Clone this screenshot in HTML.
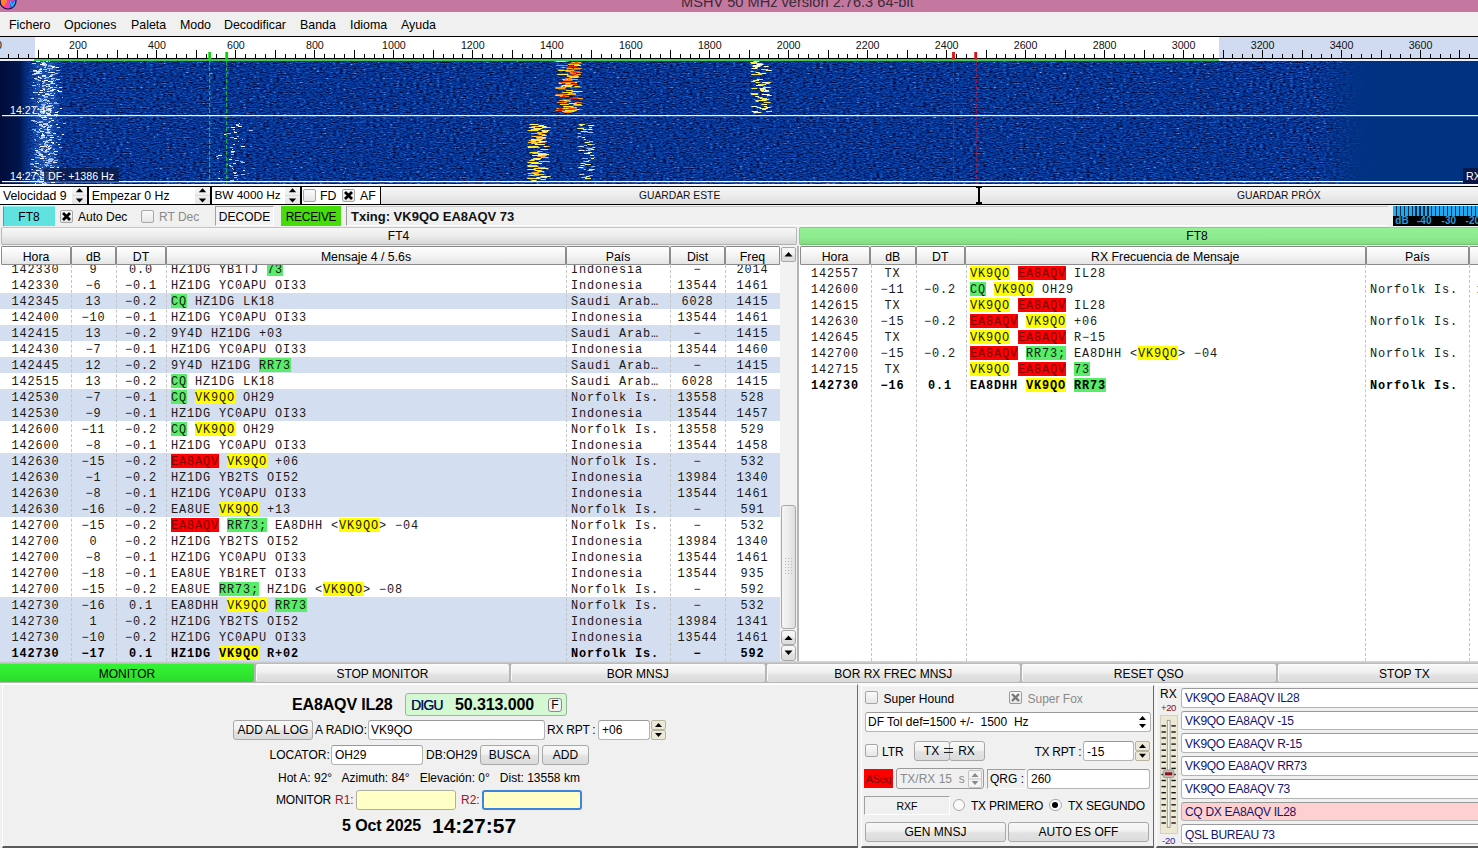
<!DOCTYPE html><html><head><meta charset="utf-8"><title>MSHV</title><style>
*{box-sizing:border-box;margin:0;padding:0}
html,body{width:1478px;height:848px;overflow:hidden;background:#f0f0f0}
body{position:relative;font-family:"Liberation Sans",sans-serif;font-size:12px;color:#000}
.a{position:absolute;white-space:nowrap}
.t{position:absolute;white-space:nowrap;line-height:1}
.mono{font-family:"Liberation Mono",monospace;font-size:11.9px;letter-spacing:0.86px;line-height:16px;color:#1a1a1a}
.btn{position:absolute;white-space:nowrap;text-align:center;border:1px solid #a8a8a8;border-radius:3px;background:linear-gradient(#f8f8f8,#f1f1f1 45%,#e2e2e2 55%,#dcdcdc);}
.hd{position:absolute;top:247px;height:18.7px;border:1px solid #8c8c8c;border-top-color:#868686;border-radius:1.5px;background:linear-gradient(#ffffff,#f4f4f4 50%,#e4e4e4);text-align:center;line-height:20.6px;font-size:12.3px;white-space:nowrap;overflow:hidden}
.inp{position:absolute;background:#fff;border:1px solid #b4b4b4;border-top-color:#9a9a9a;border-radius:3px;white-space:nowrap;padding-left:3px}
.cb{position:absolute;width:13px;height:13px;border:1px solid #a6a6a6;border-radius:2px;background:linear-gradient(#fbfbfb,#e6e6e6)}
.row{position:absolute;left:0;height:16px}
.c{position:absolute;top:1.4px;height:16px;text-align:center}
.hy{background:#ffff00}.hg{background:#55ee66}.hr{background:#ff0000;color:#7a0000}
.hy,.hg,.hr{display:inline-block;height:13.7px;line-height:16.8px;vertical-align:top;margin-top:-0.4px}
.dash{position:absolute;width:0;border-left:1px dashed #c4c4c4}
</style></head><body>
<div class="a" style="left:0;top:0;width:1478px;height:12.5px;background:#c478a0;overflow:hidden"><div class="t" style="left:681px;top:-5px;font-size:14.6px;color:#3c2a36">MSHV 50 MHz version 2.76.3 64-bit</div><svg class="a" style="left:-1.2px;top:-8px" width="18" height="18" viewBox="0 0 18 18"><defs><clipPath id="ic"><circle cx="9" cy="9" r="8"/></clipPath></defs><g clip-path="url(#ic)"><rect width="18" height="18" fill="#ff3ca0"/><path d="M0 0h8.5c-1.5 5 1 8-2.5 13L0 18z" fill="#ff842c"/><path d="M9.5 8c1.5 3 2 6 0.5 10h8V6c-2 3-6 4-8.5 2z" fill="#2a6cf4"/><path d="M11 9l2.5 5 3.5-6" stroke="#20c4ff" stroke-width="1.4" fill="none"/><path d="M10 0h8v8c-3 2-6.5 0-8-8z" fill="#8a4ce0"/><path d="M0 4v14h3C1.5 14 1 9 1.6 4z" fill="#4a0828"/></g><circle cx="9" cy="9" r="8" fill="none" stroke="#1a0a50" stroke-width="1.2"/></svg></div>
<div class="a" style="left:0;top:12px;width:1478px;height:24px;background:#f0f0f0;border-top:1px solid #fbeff5"></div>
<div class="t" style="left:9px;top:18.8px;font-size:12.4px">Fichero</div>
<div class="t" style="left:64px;top:18.8px;font-size:12.4px">Opciones</div>
<div class="t" style="left:131px;top:18.8px;font-size:12.4px">Paleta</div>
<div class="t" style="left:180px;top:18.8px;font-size:12.4px">Modo</div>
<div class="t" style="left:224px;top:18.8px;font-size:12.4px">Decodificar</div>
<div class="t" style="left:300px;top:18.8px;font-size:12.4px">Banda</div>
<div class="t" style="left:350px;top:18.8px;font-size:12.4px">Idioma</div>
<div class="t" style="left:401px;top:18.8px;font-size:12.4px">Ayuda</div>
<div class="a" style="left:0;top:36px;width:1478px;height:26px;background:#fff;overflow:hidden">
<div class="a" style="left:0;top:0;width:34.7px;height:26px;background:#d0daf0"></div>
<div class="a" style="left:1219px;top:0;width:259px;height:26px;background:#d0daf0"></div>
<div class="a" style="left:0;top:0;width:1478px;height:1px;background:#000"></div>
<svg class="a" style="left:0;top:0" width="1478" height="26"><rect x="-1" y="14" width="1" height="8.5" fill="#000"/><rect x="8" y="18" width="1" height="4.5" fill="#000"/><rect x="18" y="18" width="1" height="4.5" fill="#000"/><rect x="28" y="18" width="1" height="4.5" fill="#000"/><rect x="38" y="14" width="1" height="8.5" fill="#000"/><rect x="48" y="18" width="1" height="4.5" fill="#000"/><rect x="58" y="18" width="1" height="4.5" fill="#000"/><rect x="68" y="18" width="1" height="4.5" fill="#000"/><rect x="77" y="14" width="1" height="8.5" fill="#000"/><rect x="87" y="18" width="1" height="4.5" fill="#000"/><rect x="97" y="18" width="1" height="4.5" fill="#000"/><rect x="107" y="18" width="1" height="4.5" fill="#000"/><rect x="117" y="14" width="1" height="8.5" fill="#000"/><rect x="127" y="18" width="1" height="4.5" fill="#000"/><rect x="137" y="18" width="1" height="4.5" fill="#000"/><rect x="147" y="18" width="1" height="4.5" fill="#000"/><rect x="156" y="14" width="1" height="8.5" fill="#000"/><rect x="166" y="18" width="1" height="4.5" fill="#000"/><rect x="176" y="18" width="1" height="4.5" fill="#000"/><rect x="186" y="18" width="1" height="4.5" fill="#000"/><rect x="196" y="14" width="1" height="8.5" fill="#000"/><rect x="206" y="18" width="1" height="4.5" fill="#000"/><rect x="216" y="18" width="1" height="4.5" fill="#000"/><rect x="226" y="18" width="1" height="4.5" fill="#000"/><rect x="235" y="14" width="1" height="8.5" fill="#000"/><rect x="245" y="18" width="1" height="4.5" fill="#000"/><rect x="255" y="18" width="1" height="4.5" fill="#000"/><rect x="265" y="18" width="1" height="4.5" fill="#000"/><rect x="275" y="14" width="1" height="8.5" fill="#000"/><rect x="285" y="18" width="1" height="4.5" fill="#000"/><rect x="295" y="18" width="1" height="4.5" fill="#000"/><rect x="305" y="18" width="1" height="4.5" fill="#000"/><rect x="314" y="14" width="1" height="8.5" fill="#000"/><rect x="324" y="18" width="1" height="4.5" fill="#000"/><rect x="334" y="18" width="1" height="4.5" fill="#000"/><rect x="344" y="18" width="1" height="4.5" fill="#000"/><rect x="354" y="14" width="1" height="8.5" fill="#000"/><rect x="364" y="18" width="1" height="4.5" fill="#000"/><rect x="374" y="18" width="1" height="4.5" fill="#000"/><rect x="383" y="18" width="1" height="4.5" fill="#000"/><rect x="393" y="14" width="1" height="8.5" fill="#000"/><rect x="403" y="18" width="1" height="4.5" fill="#000"/><rect x="413" y="18" width="1" height="4.5" fill="#000"/><rect x="423" y="18" width="1" height="4.5" fill="#000"/><rect x="433" y="14" width="1" height="8.5" fill="#000"/><rect x="443" y="18" width="1" height="4.5" fill="#000"/><rect x="453" y="18" width="1" height="4.5" fill="#000"/><rect x="462" y="18" width="1" height="4.5" fill="#000"/><rect x="472" y="14" width="1" height="8.5" fill="#000"/><rect x="482" y="18" width="1" height="4.5" fill="#000"/><rect x="492" y="18" width="1" height="4.5" fill="#000"/><rect x="502" y="18" width="1" height="4.5" fill="#000"/><rect x="512" y="14" width="1" height="8.5" fill="#000"/><rect x="522" y="18" width="1" height="4.5" fill="#000"/><rect x="532" y="18" width="1" height="4.5" fill="#000"/><rect x="541" y="18" width="1" height="4.5" fill="#000"/><rect x="551" y="14" width="1" height="8.5" fill="#000"/><rect x="561" y="18" width="1" height="4.5" fill="#000"/><rect x="571" y="18" width="1" height="4.5" fill="#000"/><rect x="581" y="18" width="1" height="4.5" fill="#000"/><rect x="591" y="14" width="1" height="8.5" fill="#000"/><rect x="601" y="18" width="1" height="4.5" fill="#000"/><rect x="611" y="18" width="1" height="4.5" fill="#000"/><rect x="620" y="18" width="1" height="4.5" fill="#000"/><rect x="630" y="14" width="1" height="8.5" fill="#000"/><rect x="640" y="18" width="1" height="4.5" fill="#000"/><rect x="650" y="18" width="1" height="4.5" fill="#000"/><rect x="660" y="18" width="1" height="4.5" fill="#000"/><rect x="670" y="14" width="1" height="8.5" fill="#000"/><rect x="680" y="18" width="1" height="4.5" fill="#000"/><rect x="690" y="18" width="1" height="4.5" fill="#000"/><rect x="699" y="18" width="1" height="4.5" fill="#000"/><rect x="709" y="14" width="1" height="8.5" fill="#000"/><rect x="719" y="18" width="1" height="4.5" fill="#000"/><rect x="729" y="18" width="1" height="4.5" fill="#000"/><rect x="739" y="18" width="1" height="4.5" fill="#000"/><rect x="749" y="14" width="1" height="8.5" fill="#000"/><rect x="759" y="18" width="1" height="4.5" fill="#000"/><rect x="768" y="18" width="1" height="4.5" fill="#000"/><rect x="778" y="18" width="1" height="4.5" fill="#000"/><rect x="788" y="14" width="1" height="8.5" fill="#000"/><rect x="798" y="18" width="1" height="4.5" fill="#000"/><rect x="808" y="18" width="1" height="4.5" fill="#000"/><rect x="818" y="18" width="1" height="4.5" fill="#000"/><rect x="828" y="14" width="1" height="8.5" fill="#000"/><rect x="838" y="18" width="1" height="4.5" fill="#000"/><rect x="847" y="18" width="1" height="4.5" fill="#000"/><rect x="857" y="18" width="1" height="4.5" fill="#000"/><rect x="867" y="14" width="1" height="8.5" fill="#000"/><rect x="877" y="18" width="1" height="4.5" fill="#000"/><rect x="887" y="18" width="1" height="4.5" fill="#000"/><rect x="897" y="18" width="1" height="4.5" fill="#000"/><rect x="907" y="14" width="1" height="8.5" fill="#000"/><rect x="917" y="18" width="1" height="4.5" fill="#000"/><rect x="926" y="18" width="1" height="4.5" fill="#000"/><rect x="936" y="18" width="1" height="4.5" fill="#000"/><rect x="946" y="14" width="1" height="8.5" fill="#000"/><rect x="956" y="18" width="1" height="4.5" fill="#000"/><rect x="966" y="18" width="1" height="4.5" fill="#000"/><rect x="976" y="18" width="1" height="4.5" fill="#000"/><rect x="986" y="14" width="1" height="8.5" fill="#000"/><rect x="996" y="18" width="1" height="4.5" fill="#000"/><rect x="1005" y="18" width="1" height="4.5" fill="#000"/><rect x="1015" y="18" width="1" height="4.5" fill="#000"/><rect x="1025" y="14" width="1" height="8.5" fill="#000"/><rect x="1035" y="18" width="1" height="4.5" fill="#000"/><rect x="1045" y="18" width="1" height="4.5" fill="#000"/><rect x="1055" y="18" width="1" height="4.5" fill="#000"/><rect x="1065" y="14" width="1" height="8.5" fill="#000"/><rect x="1074" y="18" width="1" height="4.5" fill="#000"/><rect x="1084" y="18" width="1" height="4.5" fill="#000"/><rect x="1094" y="18" width="1" height="4.5" fill="#000"/><rect x="1104" y="14" width="1" height="8.5" fill="#000"/><rect x="1114" y="18" width="1" height="4.5" fill="#000"/><rect x="1124" y="18" width="1" height="4.5" fill="#000"/><rect x="1134" y="18" width="1" height="4.5" fill="#000"/><rect x="1144" y="14" width="1" height="8.5" fill="#000"/><rect x="1153" y="18" width="1" height="4.5" fill="#000"/><rect x="1163" y="18" width="1" height="4.5" fill="#000"/><rect x="1173" y="18" width="1" height="4.5" fill="#000"/><rect x="1183" y="14" width="1" height="8.5" fill="#000"/><rect x="1193" y="18" width="1" height="4.5" fill="#000"/><rect x="1203" y="18" width="1" height="4.5" fill="#000"/><rect x="1213" y="18" width="1" height="4.5" fill="#000"/><rect x="1223" y="14" width="1" height="8.5" fill="#000"/><rect x="1232" y="18" width="1" height="4.5" fill="#000"/><rect x="1242" y="18" width="1" height="4.5" fill="#000"/><rect x="1252" y="18" width="1" height="4.5" fill="#000"/><rect x="1262" y="14" width="1" height="8.5" fill="#000"/><rect x="1272" y="18" width="1" height="4.5" fill="#000"/><rect x="1282" y="18" width="1" height="4.5" fill="#000"/><rect x="1292" y="18" width="1" height="4.5" fill="#000"/><rect x="1302" y="14" width="1" height="8.5" fill="#000"/><rect x="1311" y="18" width="1" height="4.5" fill="#000"/><rect x="1321" y="18" width="1" height="4.5" fill="#000"/><rect x="1331" y="18" width="1" height="4.5" fill="#000"/><rect x="1341" y="14" width="1" height="8.5" fill="#000"/><rect x="1351" y="18" width="1" height="4.5" fill="#000"/><rect x="1361" y="18" width="1" height="4.5" fill="#000"/><rect x="1371" y="18" width="1" height="4.5" fill="#000"/><rect x="1381" y="14" width="1" height="8.5" fill="#000"/><rect x="1390" y="18" width="1" height="4.5" fill="#000"/><rect x="1400" y="18" width="1" height="4.5" fill="#000"/><rect x="1410" y="18" width="1" height="4.5" fill="#000"/><rect x="1420" y="14" width="1" height="8.5" fill="#000"/><rect x="1430" y="18" width="1" height="4.5" fill="#000"/><rect x="1440" y="18" width="1" height="4.5" fill="#000"/><rect x="1450" y="18" width="1" height="4.5" fill="#000"/><rect x="1459" y="14" width="1" height="8.5" fill="#000"/><rect x="1469" y="18" width="1" height="4.5" fill="#000"/><rect x="1479" y="18" width="1" height="4.5" fill="#000"/><rect x="0" y="22" width="1478" height="1" fill="#000"/><rect x="0" y="23" width="1478" height="3" fill="#e4eefc"/><rect x="34" y="23" width="1185" height="2" fill="#3ccc58"/><rect x="34" y="25" width="1185" height="1" fill="#1a8a3a"/><rect x="208.3" y="16" width="2.8" height="7.5" fill="#10d010"/><rect x="225.3" y="16" width="2.8" height="7.5" fill="#10d010"/><rect x="952.1" y="16" width="2.8" height="7.5" fill="#e01010"/><rect x="974.3" y="16" width="2.8" height="7.5" fill="#e01010"/></svg>
<div class="t" style="left:-21.0px;top:3.9px;width:40px;text-align:center;font-size:10.67px;color:#111">0</div>
<div class="t" style="left:58.0px;top:3.9px;width:40px;text-align:center;font-size:10.67px;color:#111">200</div>
<div class="t" style="left:137.0px;top:3.9px;width:40px;text-align:center;font-size:10.67px;color:#111">400</div>
<div class="t" style="left:215.9px;top:3.9px;width:40px;text-align:center;font-size:10.67px;color:#111">600</div>
<div class="t" style="left:294.9px;top:3.9px;width:40px;text-align:center;font-size:10.67px;color:#111">800</div>
<div class="t" style="left:373.9px;top:3.9px;width:40px;text-align:center;font-size:10.67px;color:#111">1000</div>
<div class="t" style="left:452.8px;top:3.9px;width:40px;text-align:center;font-size:10.67px;color:#111">1200</div>
<div class="t" style="left:531.8px;top:3.9px;width:40px;text-align:center;font-size:10.67px;color:#111">1400</div>
<div class="t" style="left:610.8px;top:3.9px;width:40px;text-align:center;font-size:10.67px;color:#111">1600</div>
<div class="t" style="left:689.8px;top:3.9px;width:40px;text-align:center;font-size:10.67px;color:#111">1800</div>
<div class="t" style="left:768.7px;top:3.9px;width:40px;text-align:center;font-size:10.67px;color:#111">2000</div>
<div class="t" style="left:847.7px;top:3.9px;width:40px;text-align:center;font-size:10.67px;color:#111">2200</div>
<div class="t" style="left:926.7px;top:3.9px;width:40px;text-align:center;font-size:10.67px;color:#111">2400</div>
<div class="t" style="left:1005.6px;top:3.9px;width:40px;text-align:center;font-size:10.67px;color:#111">2600</div>
<div class="t" style="left:1084.6px;top:3.9px;width:40px;text-align:center;font-size:10.67px;color:#111">2800</div>
<div class="t" style="left:1163.6px;top:3.9px;width:40px;text-align:center;font-size:10.67px;color:#111">3000</div>
<div class="t" style="left:1242.6px;top:3.9px;width:40px;text-align:center;font-size:10.67px;color:#111">3200</div>
<div class="t" style="left:1321.5px;top:3.9px;width:40px;text-align:center;font-size:10.67px;color:#111">3400</div>
<div class="t" style="left:1400.5px;top:3.9px;width:40px;text-align:center;font-size:10.67px;color:#111">3600</div>
</div>
<svg class="a" style="left:0;top:61px" width="1478" height="124" viewBox="0 0 1478 124"><defs>
<filter id="nz" x="0" y="0" width="1" height="1" color-interpolation-filters="sRGB">
<feTurbulence type="fractalNoise" baseFrequency="0.30 0.80" numOctaves="2" seed="11" result="t"/>
<feColorMatrix in="t" type="matrix" values="1 0 0 0 0  1 0 0 0 0  1 0 0 0 0  0 0 0 0 1" result="g"/>
<feComponentTransfer in="g">
<feFuncR type="table" tableValues="0.000 0.000 0.000 0.000 0.000 0.000 0.000 0.000 0.000 0.000 0.000 0.000 0.001 0.002 0.003 0.005 0.007 0.010 0.013 0.016 0.018 0.020 0.024 0.029 0.036 0.043 0.049 0.060 0.088 0.115 0.143 0.177 0.239 0.301 0.362 0.426 0.498 0.569 0.641 0.713 0.784"/>
<feFuncG type="table" tableValues="0.031 0.031 0.031 0.031 0.031 0.031 0.031 0.033 0.040 0.046 0.053 0.062 0.079 0.095 0.112 0.129 0.147 0.164 0.182 0.198 0.210 0.222 0.231 0.242 0.253 0.265 0.277 0.292 0.320 0.349 0.377 0.411 0.466 0.521 0.576 0.629 0.676 0.722 0.769 0.816 0.863"/>
<feFuncB type="table" tableValues="0.212 0.212 0.212 0.212 0.212 0.212 0.212 0.216 0.238 0.259 0.281 0.305 0.340 0.376 0.411 0.445 0.475 0.504 0.533 0.560 0.578 0.595 0.611 0.627 0.642 0.658 0.674 0.692 0.718 0.745 0.771 0.798 0.825 0.853 0.880 0.905 0.920 0.935 0.950 0.965 0.980"/>
</feComponentTransfer>
</filter>
<filter id="wh" x="0" y="0" width="1" height="1" color-interpolation-filters="sRGB">
<feTurbulence type="fractalNoise" baseFrequency="0.35 0.9" numOctaves="2" seed="5" result="t"/>
<feColorMatrix in="t" type="matrix" values="0 0 0 0 0.82  0 0 0 0 0.9  0 0 0 0 1  5 0 0 0 -2.45"/>
</filter>
<filter id="wh2" x="0" y="0" width="1" height="1" color-interpolation-filters="sRGB">
<feTurbulence type="fractalNoise" baseFrequency="0.35 0.9" numOctaves="2" seed="23" result="t"/>
<feColorMatrix in="t" type="matrix" values="0 0 0 0 0.85  0 0 0 0 0.9  0 0 0 0 1  6 0 0 0 -3.75"/>
</filter>
<filter id="sg" x="0" y="0" width="1" height="1" color-interpolation-filters="sRGB">
<feTurbulence type="fractalNoise" baseFrequency="0.22 0.85" numOctaves="2" seed="31" result="t"/>
<feColorMatrix in="t" type="matrix" values="0 0 0 0 1  0 -3.2 0 0 2.3  0 0 0 0 0.08  7 0 0 0 -2.9"/>
</filter>
<filter id="sy" x="0" y="0" width="1" height="1" color-interpolation-filters="sRGB">
<feTurbulence type="fractalNoise" baseFrequency="0.25 0.9" numOctaves="2" seed="41" result="t"/>
<feColorMatrix in="t" type="matrix" values="0 0 0 0 1  0 0 0 0 0.95  0 2 0 0 -0.7  8 0 0 0 -3.7"/>
</filter>
<filter id="sy2" x="0" y="0" width="1" height="1" color-interpolation-filters="sRGB">
<feTurbulence type="fractalNoise" baseFrequency="0.25 0.9" numOctaves="2" seed="47" result="t"/>
<feColorMatrix in="t" type="matrix" values="0 0 0 0 1  0 0 0 0 0.93  0 -1.2 0 0 0.9  8 0 0 0 -3.3"/>
</filter>
<linearGradient id="lg" x1="0" x2="1"><stop offset="0" stop-color="#000c3a"/><stop offset="0.6" stop-color="#00164e"/><stop offset="0.8" stop-color="#042a74" stop-opacity="0.8"/><stop offset="1" stop-color="#0a3a96" stop-opacity="0"/></linearGradient>
<linearGradient id="rg" x1="0" x2="1"><stop offset="0" stop-color="#003282" stop-opacity="0"/><stop offset="1" stop-color="#003282"/></linearGradient>
<linearGradient id="bf" x1="0" x2="1"><stop offset="0" stop-color="#fff" stop-opacity="0"/><stop offset="0.3" stop-color="#fff"/><stop offset="0.7" stop-color="#fff"/><stop offset="1" stop-color="#fff" stop-opacity="0"/></linearGradient>
<mask id="bm"><rect x="29" y="0" width="33" height="124" fill="url(#bf)"/></mask>
</defs><rect x="0" y="0" width="1478" height="124" fill="#0a3c9a"/><rect x="0" y="0" width="1366" height="124" filter="url(#nz)"/><g mask="url(#bm)"><rect x="29" y="0" width="33" height="124" fill="#3c78d8" opacity="0.38"/></g><path d="M41 1.5h3M42 2.5h4M40 3.5h4M52 6.5h4M55 6.5h4M39 8.5h3M39 10.5h3M51 11.5h3M34 12.5h3M38 15.5h1M45 15.5h1M35 18.5h2M44 19.5h4M48 20.5h1M49 20.5h4M46 25.5h4M50 26.5h1M52 28.5h4M40 29.5h3M58 30.5h4M45 33.5h2M38 33.5h1M42 34.5h3M43 39.5h3M45 39.5h4M38 41.5h1M47 42.5h1M43 47.5h1M60 47.5h2M49 48.5h2M42 50.5h3M41 50.5h4M55 51.5h3M44 56.5h3M51 57.5h1M51 59.5h3M50 64.5h2M47 67.5h1M42 72.5h1M53 72.5h3M62 73.5h2M50 74.5h3M41 74.5h4M50 76.5h4M46 76.5h1M50 78.5h1M45 81.5h2M52 82.5h2M46 84.5h2M40 85.5h4M48 85.5h2M46 85.5h1M46 88.5h2M35 89.5h3M40 97.5h4M45 101.5h1M57 106.5h2M39 107.5h2M36 109.5h4M52 110.5h2M45 111.5h3M42 112.5h1M45 117.5h1M47 119.5h1M40 120.5h2M35 122.5h1" stroke="#ffffff" stroke-width="1" fill="none"/><path d="M46 0.5h2M36 0.5h4M44 3.5h3M43 4.5h1M51 5.5h1M51 5.5h4M48 7.5h2M49 9.5h1M33 9.5h4M36 10.5h3M36 12.5h4M42 14.5h4M49 15.5h3M38 16.5h3M42 20.5h3M51 22.5h4M47 23.5h3M37 23.5h1M56 24.5h1M50 26.5h3M43 28.5h2M57 29.5h2M50 29.5h4M47 30.5h4M39 31.5h4M33 31.5h2M54 32.5h1M50 32.5h1M47 33.5h3M49 34.5h3M51 34.5h3M46 35.5h2M46 36.5h2M42 38.5h1M41 38.5h2M49 42.5h3M42 43.5h3M49 44.5h4M47 45.5h3M53 46.5h1M48 47.5h3M44 49.5h3M48 53.5h3M52 54.5h4M41 56.5h4M42 56.5h3M45 56.5h1M44 58.5h2M56 63.5h2M43 63.5h1M42 65.5h4M47 66.5h4M46 68.5h4M39 68.5h1M40 70.5h4M46 71.5h4M53 72.5h2M42 73.5h2M41 77.5h1M47 79.5h3M43 80.5h4M43 80.5h2M51 81.5h3M44 83.5h3M58 83.5h2M48 87.5h3M41 89.5h2M45 89.5h2M35 89.5h2M54 90.5h4M45 91.5h1M48 93.5h2M39 93.5h4M38 94.5h2M41 95.5h2M31 98.5h3M46 101.5h4M53 101.5h4M35 102.5h4M37 102.5h2M48 104.5h1M45 104.5h4M42 106.5h1M48 108.5h2M32 108.5h1M50 109.5h2M35 112.5h3M42 114.5h3M51 115.5h4M34 117.5h1M59 120.5h2M51 121.5h4M42 122.5h4M48 123.5h4" stroke="#e6efff" stroke-width="1" fill="none"/><path d="M49 0.5h1M32 2.5h4M44 2.5h2M44 6.5h2M43 8.5h4M53 11.5h2M36 11.5h4M42 15.5h4M34 17.5h3M40 17.5h2M53 19.5h1M51 21.5h2M46 23.5h2M39 23.5h1M59 26.5h3M31 37.5h3M44 38.5h3M37 40.5h1M43 43.5h3M44 44.5h1M33 46.5h1M50 47.5h2M40 48.5h2M40 48.5h4M33 52.5h4M54 53.5h4M47 53.5h1M52 54.5h3M54 54.5h2M44 55.5h2M31 59.5h4M49 60.5h2M39 63.5h3M44 63.5h4M57 66.5h3M40 67.5h2M46 71.5h1M50 74.5h3M42 75.5h3M39 76.5h1M45 80.5h3M44 82.5h2M44 85.5h2M54 93.5h3M42 95.5h4M48 98.5h3M48 100.5h4M30 103.5h4M50 106.5h4M55 108.5h4M40 110.5h2M43 111.5h1M34 111.5h3M31 114.5h1M40 118.5h3M57 118.5h1M57 119.5h2M35 120.5h1M54 123.5h2M36 123.5h2M38 123.5h3" stroke="#c4d8fa" stroke-width="1" fill="none"/><path d="M45 3.5h1M47 7.5h2M43 8.5h2M45 10.5h2M33 10.5h3M39 12.5h3M34 13.5h2M45 16.5h4M44 17.5h2M51 17.5h4M44 20.5h1M33 21.5h1M50 27.5h1M55 28.5h1M44 31.5h1M45 32.5h4M45 35.5h3M44 36.5h1M38 37.5h3M44 39.5h4M47 40.5h3M41 43.5h4M48 44.5h4M36 45.5h2M45 46.5h1M37 48.5h3M41 52.5h3M48 52.5h1M38 53.5h3M39 55.5h2M43 58.5h4M36 62.5h1M63 62.5h3M47 69.5h2M34 69.5h2M58 78.5h3M49 79.5h3M44 80.5h2M46 81.5h3M39 83.5h2M49 84.5h3M39 86.5h1M50 86.5h2M38 92.5h3M37 94.5h3M35 96.5h2M45 97.5h1M49 100.5h1M40 103.5h1M45 104.5h4M34 105.5h2M31 108.5h1M41 110.5h1M42 112.5h2M46 114.5h3M39 121.5h4" stroke="#9cbcf0" stroke-width="1" fill="none"/><path d="M43 0.5h1M48 4.5h4M42 4.5h2M48 5.5h3M54 6.5h2M49 8.5h1M38 9.5h3M51 14.5h1M35 18.5h4M55 19.5h1M48 24.5h2M39 25.5h1M49 30.5h4M48 34.5h3M43 35.5h2M45 36.5h3M40 38.5h3M39 39.5h3M54 41.5h3M48 45.5h2M40 46.5h4M57 50.5h2M48 50.5h1M32 51.5h2M30 54.5h2M56 55.5h1M44 58.5h1M33 60.5h2M40 61.5h3M43 62.5h1M40 64.5h2M43 65.5h1M48 65.5h4M44 68.5h3M32 68.5h4M39 69.5h2M36 70.5h3M47 70.5h4M47 72.5h4M36 73.5h2M34 78.5h2M46 79.5h2M44 84.5h3M41 87.5h3M53 88.5h2M36 90.5h4M43 90.5h3M53 92.5h2M34 93.5h3M50 95.5h1M54 96.5h2M42 96.5h2M46 97.5h1M43 99.5h2M53 100.5h2M35 100.5h2M30 102.5h3M47 102.5h4M46 103.5h1M44 103.5h4M54 105.5h1M36 106.5h3M54 107.5h1M44 107.5h3M40 109.5h2M40 111.5h4M46 113.5h3M56 113.5h2M48 115.5h1M46 115.5h4M55 116.5h3M49 117.5h4M43 119.5h2M37 119.5h3" stroke="#7ea6e8" stroke-width="1" fill="none"/><path d="M43 4.5h4M45 5.5h1M48 11.5h3M55 12.5h3M32 13.5h3M51 13.5h3M50 14.5h3M56 18.5h4M38 19.5h3M51 21.5h2M53 22.5h1M42 24.5h4M32 24.5h4M48 27.5h2M44 29.5h1M34 31.5h4M50 32.5h2M39 33.5h1M62 36.5h1M46 41.5h1M43 49.5h3M48 49.5h4M42 51.5h3M40 51.5h3M46 52.5h2M49 57.5h2M44 58.5h2M35 60.5h2M48 61.5h2M37 61.5h4M44 62.5h4M39 64.5h4M46 64.5h3M43 66.5h2M45 71.5h1M57 75.5h2M41 76.5h4M40 77.5h3M49 78.5h3M56 81.5h1M35 87.5h1M47 88.5h3M39 88.5h4M45 90.5h4M42 94.5h1M39 94.5h4M51 98.5h2M50 104.5h2M34 105.5h3M38 109.5h2M58 112.5h1M40 113.5h4M39 115.5h2M40 116.5h4M40 118.5h4" stroke="#b4ccf4" stroke-width="1" fill="none"/><path d="M41 1.5h3M41 1.5h4M43 1.5h2M49 7.5h4M40 7.5h2M56 9.5h4M53 13.5h2M51 18.5h2M43 21.5h2M42 22.5h2M50 22.5h1M47 25.5h2M42 25.5h2M54 26.5h3M42 27.5h3M35 27.5h1M47 28.5h2M44 35.5h1M51 37.5h3M39 40.5h4M45 41.5h2M54 42.5h4M50 42.5h2M44 43.5h2M42 44.5h2M49 45.5h3M46 49.5h2M42 57.5h1M51 59.5h1M39 60.5h4M41 65.5h1M49 66.5h2M37 71.5h3M47 74.5h3M57 75.5h2M41 75.5h4M35 79.5h1M45 82.5h1M52 82.5h1M44 83.5h4M59 86.5h3M46 86.5h3M44 91.5h3M36 91.5h4M53 91.5h1M49 92.5h4M36 96.5h4M49 97.5h4M53 98.5h1M54 99.5h4M49 99.5h4M46 99.5h3M47 101.5h3M46 105.5h1M39 107.5h1M45 110.5h2M51 113.5h3M50 116.5h2M42 116.5h3M47 117.5h3M46 118.5h4M44 121.5h2M44 121.5h2M44 122.5h1M46 122.5h1" stroke="#8fb2ec" stroke-width="1" fill="none"/><path d="M239 62.5h1M238 65.5h4M231 66.5h4M234 71.5h3M224 73.5h2M234 77.5h3M241 85.5h4M232 88.5h1M231 90.5h4M218 94.5h4M229 98.5h3M234 112.5h2M250 120.5h3" stroke="#ffffff" stroke-width="1" fill="none"/><path d="M236 64.5h3M233 68.5h2M233 83.5h2M233 102.5h3M229 104.5h2M232 107.5h1M243 109.5h2M218 117.5h2" stroke="#d8e6ff" stroke-width="1" fill="none"/><path d="M236 63.5h3M249 69.5h4M234 70.5h1M237 75.5h2M242 78.5h1M238 80.5h1M230 86.5h3M231 91.5h3M216 95.5h2M217 97.5h2M241 101.5h4M227 103.5h1M233 108.5h1M219 110.5h1M233 111.5h4M241 113.5h4M234 114.5h4M234 116.5h3M230 119.5h4" stroke="#a8c4f4" stroke-width="1" fill="none"/><path d="M227 72.5h4M230 76.5h4M219 89.5h1M231 93.5h3M231 96.5h1M235 99.5h4M240 100.5h3M230 105.5h3M237 118.5h1" stroke="#88b0ee" stroke-width="1" fill="none"/><rect x="555.7" y="0" width="7" height="1" fill="#ffe428"/><rect x="560.2" y="0" width="8" height="1" fill="#fff06a"/><rect x="565.5" y="0" width="3" height="1" fill="#ff7a14"/><rect x="571.3" y="1" width="10" height="1" fill="#ffa418"/><rect x="574.9" y="1" width="3" height="1" fill="#f04a10"/><rect x="570.1" y="2" width="12" height="1" fill="#f04a10"/><rect x="568.3" y="3" width="11" height="1" fill="#ffe428"/><rect x="570.3" y="3" width="7" height="1" fill="#ffa418"/><rect x="574.9" y="3" width="2" height="1" fill="#ffd020"/><rect x="574.1" y="4" width="7" height="1" fill="#fff06a"/><rect x="555.9" y="4" width="12" height="1" fill="#ff7a14"/><rect x="563.8" y="4" width="2" height="1" fill="#f04a10"/><rect x="567.7" y="5" width="10" height="1" fill="#e02a10"/><rect x="560.0" y="6" width="11" height="1" fill="#e02a10"/><rect x="562.5" y="6" width="2" height="1" fill="#ffe428"/><rect x="566.7" y="7" width="6" height="1" fill="#ffa418"/><rect x="573.7" y="7" width="8" height="1" fill="#ffa418"/><rect x="571.3" y="8" width="9" height="1" fill="#f04a10"/><rect x="557.4" y="8" width="6" height="1" fill="#f04a10"/><rect x="562.4" y="9" width="12" height="1" fill="#ffa418"/><rect x="565.9" y="9" width="3" height="1" fill="#ffd020"/><rect x="558.2" y="9" width="7" height="1" fill="#ffe428"/><rect x="565.6" y="10" width="9" height="1" fill="#ffa418"/><rect x="570.9" y="10" width="9" height="1" fill="#f04a10"/><rect x="569.6" y="11" width="12" height="1" fill="#ff7a14"/><rect x="572.9" y="11" width="4" height="1" fill="#e02a10"/><rect x="570.2" y="12" width="6" height="1" fill="#ff7a14"/><rect x="557.4" y="13" width="11" height="1" fill="#fff06a"/><rect x="570.7" y="13" width="9" height="1" fill="#e02a10"/><rect x="576.7" y="13" width="4" height="1" fill="#ffd020"/><rect x="566.8" y="14" width="11" height="1" fill="#ffa418"/><rect x="570.2" y="14" width="4" height="1" fill="#e02a10"/><rect x="566.9" y="15" width="12" height="1" fill="#ffd020"/><rect x="569.4" y="16" width="9" height="1" fill="#ffd020"/><rect x="574.6" y="16" width="2" height="1" fill="#fff06a"/><rect x="565.2" y="17" width="7" height="1" fill="#ff7a14"/><rect x="562.4" y="18" width="6" height="1" fill="#fff06a"/><rect x="564.7" y="18" width="2" height="1" fill="#ff7a14"/><rect x="568.8" y="18" width="9" height="1" fill="#ffa418"/><rect x="563.2" y="19" width="9" height="1" fill="#ff7a14"/><rect x="574.5" y="20" width="6" height="1" fill="#e02a10"/><rect x="577.7" y="20" width="3" height="1" fill="#f04a10"/><rect x="558.7" y="21" width="11" height="1" fill="#ff7a14"/><rect x="560.3" y="21" width="2" height="1" fill="#e02a10"/><rect x="566.3" y="21" width="11" height="1" fill="#ff7a14"/><rect x="575.0" y="21" width="2" height="1" fill="#fff06a"/><rect x="558.6" y="22" width="12" height="1" fill="#fff06a"/><rect x="561.8" y="22" width="4" height="1" fill="#e02a10"/><rect x="566.3" y="23" width="7" height="1" fill="#ffe428"/><rect x="565.0" y="23" width="12" height="1" fill="#ff7a14"/><rect x="574.2" y="23" width="3" height="1" fill="#f04a10"/><rect x="563.0" y="24" width="7" height="1" fill="#ffe428"/><rect x="564.8" y="24" width="4" height="1" fill="#ffd020"/><rect x="561.7" y="24" width="11" height="1" fill="#fff06a"/><rect x="560.7" y="25" width="11" height="1" fill="#fff06a"/><rect x="562.9" y="25" width="2" height="1" fill="#f04a10"/><rect x="574.2" y="25" width="6" height="1" fill="#ffe428"/><rect x="569.9" y="26" width="12" height="1" fill="#f04a10"/><rect x="555.3" y="26" width="11" height="1" fill="#ffa418"/><rect x="555.5" y="27" width="10" height="1" fill="#ffa418"/><rect x="558.3" y="28" width="9" height="1" fill="#e02a10"/><rect x="566.1" y="29" width="7" height="1" fill="#ffd020"/><rect x="576.3" y="30" width="6" height="1" fill="#ffd020"/><rect x="571.4" y="30" width="11" height="1" fill="#fff06a"/><rect x="562.4" y="31" width="10" height="1" fill="#ffe428"/><rect x="568.2" y="32" width="8" height="1" fill="#ffa418"/><rect x="555.6" y="33" width="12" height="1" fill="#ff7a14"/><rect x="566.0" y="33" width="10" height="1" fill="#ffa418"/><rect x="567.5" y="33" width="2" height="1" fill="#fff06a"/><rect x="555.2" y="34" width="10" height="1" fill="#ffe428"/><rect x="562.9" y="34" width="2" height="1" fill="#e02a10"/><rect x="575.0" y="34" width="7" height="1" fill="#e02a10"/><rect x="559.9" y="35" width="9" height="1" fill="#ff7a14"/><rect x="562.3" y="35" width="3" height="1" fill="#e02a10"/><rect x="572.7" y="36" width="6" height="1" fill="#e02a10"/><rect x="572.8" y="37" width="10" height="1" fill="#ffa418"/><rect x="570.6" y="37" width="7" height="1" fill="#e02a10"/><rect x="562.2" y="38" width="9" height="1" fill="#f04a10"/><rect x="559.3" y="39" width="11" height="1" fill="#ffa418"/><rect x="564.0" y="39" width="3" height="1" fill="#fff06a"/><rect x="565.0" y="40" width="6" height="1" fill="#fff06a"/><rect x="567.0" y="40" width="2" height="1" fill="#f04a10"/><rect x="564.6" y="40" width="6" height="1" fill="#ff7a14"/><rect x="557.1" y="41" width="10" height="1" fill="#ff7a14"/><rect x="574.6" y="41" width="7" height="1" fill="#ff7a14"/><rect x="568.8" y="42" width="8" height="1" fill="#ffe428"/><rect x="570.3" y="42" width="3" height="1" fill="#fff06a"/><rect x="559.9" y="43" width="9" height="1" fill="#ffd020"/><rect x="573.4" y="43" width="7" height="1" fill="#ffd020"/><rect x="578.3" y="43" width="3" height="1" fill="#ffe428"/><rect x="573.4" y="44" width="8" height="1" fill="#ff7a14"/><rect x="578.3" y="44" width="4" height="1" fill="#ffd020"/><rect x="574.9" y="44" width="6" height="1" fill="#ffa418"/><rect x="565.1" y="45" width="8" height="1" fill="#ffe428"/><rect x="569.3" y="45" width="4" height="1" fill="#ffe428"/><rect x="563.2" y="45" width="7" height="1" fill="#fff06a"/><rect x="566.2" y="45" width="4" height="1" fill="#ffe428"/><rect x="564.7" y="46" width="12" height="1" fill="#fff06a"/><rect x="570.9" y="46" width="4" height="1" fill="#ff7a14"/><rect x="564.2" y="46" width="9" height="1" fill="#f04a10"/><rect x="570.7" y="46" width="3" height="1" fill="#ffe428"/><rect x="566.9" y="47" width="10" height="1" fill="#f04a10"/><rect x="556.5" y="47" width="12" height="1" fill="#ffd020"/><rect x="558.6" y="47" width="4" height="1" fill="#e02a10"/><rect x="562.3" y="48" width="10" height="1" fill="#e02a10"/><rect x="572.0" y="48" width="11" height="1" fill="#f04a10"/><rect x="575.5" y="48" width="4" height="1" fill="#fff06a"/><rect x="564.7" y="49" width="12" height="1" fill="#ffe428"/><rect x="555.5" y="49" width="8" height="1" fill="#ff7a14"/><rect x="558.5" y="49" width="4" height="1" fill="#e02a10"/><rect x="568.3" y="50" width="7" height="1" fill="#ff7a14"/><rect x="570.1" y="50" width="3" height="1" fill="#ffe428"/><rect x="562.2" y="50" width="12" height="1" fill="#ffd020"/><rect x="565.8" y="50" width="3" height="1" fill="#ffd020"/><rect x="563.6" y="51" width="8" height="1" fill="#ff7a14"/><rect x="753.4" y="0" width="4" height="1" fill="#ffffff"/><rect x="755.4" y="0" width="4" height="1" fill="#fff45a"/><rect x="750.2" y="1" width="7" height="1" fill="#ffee40"/><rect x="751.1" y="2" width="5" height="1" fill="#fff45a"/><rect x="754.1" y="2" width="4" height="1" fill="#ffee40"/><rect x="755.5" y="2" width="7" height="1" fill="#e8e060"/><rect x="756.5" y="3" width="7" height="1" fill="#ffffff"/><rect x="757.7" y="4" width="4" height="1" fill="#ffffff"/><rect x="759.6" y="4" width="2" height="1" fill="#e8e060"/><rect x="752.6" y="4" width="6" height="1" fill="#f8f8c0"/><rect x="755.2" y="4" width="2" height="1" fill="#fff45a"/><rect x="763.7" y="5" width="5" height="1" fill="#f8f8c0"/><rect x="752.6" y="5" width="8" height="1" fill="#f8f8c0"/><rect x="754.9" y="6" width="3" height="1" fill="#fff45a"/><rect x="751.6" y="7" width="5" height="1" fill="#ffffff"/><rect x="751.5" y="7" width="6" height="1" fill="#f8f8c0"/><rect x="761.1" y="8" width="7" height="1" fill="#e8e060"/><rect x="765.7" y="9" width="6" height="1" fill="#ffee40"/><rect x="768.7" y="9" width="3" height="1" fill="#ffffff"/><rect x="750.5" y="10" width="3" height="1" fill="#ffee40"/><rect x="755.6" y="11" width="4" height="1" fill="#ffffff"/><rect x="757.4" y="11" width="2" height="1" fill="#ffee40"/><rect x="757.8" y="12" width="8" height="1" fill="#e8e060"/><rect x="762.2" y="12" width="4" height="1" fill="#f8f8c0"/><rect x="755.2" y="13" width="7" height="1" fill="#e8e060"/><rect x="751.2" y="13" width="4" height="1" fill="#fff45a"/><rect x="756.8" y="18" width="6" height="1" fill="#f8f8c0"/><rect x="757.9" y="18" width="4" height="1" fill="#ffee40"/><rect x="753.0" y="19" width="6" height="1" fill="#e8e060"/><rect x="755.4" y="19" width="3" height="1" fill="#f8f8c0"/><rect x="756.4" y="19" width="2" height="1" fill="#fff45a"/><rect x="751.3" y="20" width="4" height="1" fill="#fff45a"/><rect x="755.6" y="21" width="4" height="1" fill="#fff45a"/><rect x="762.1" y="21" width="8" height="1" fill="#ffffff"/><rect x="767.3" y="21" width="4" height="1" fill="#e8e060"/><rect x="765.7" y="22" width="4" height="1" fill="#fff45a"/><rect x="761.0" y="23" width="4" height="1" fill="#ffffff"/><rect x="762.1" y="23" width="4" height="1" fill="#ffee40"/><rect x="758.2" y="23" width="4" height="1" fill="#f8f8c0"/><rect x="759.6" y="23" width="4" height="1" fill="#e8e060"/><rect x="759.3" y="24" width="3" height="1" fill="#ffffff"/><rect x="760.3" y="24" width="3" height="1" fill="#ffee40"/><rect x="756.0" y="24" width="5" height="1" fill="#ffffff"/><rect x="758.2" y="24" width="3" height="1" fill="#fff45a"/><rect x="763.8" y="26" width="7" height="1" fill="#e8e060"/><rect x="766.4" y="26" width="3" height="1" fill="#f8f8c0"/><rect x="762.9" y="26" width="5" height="1" fill="#e8e060"/><rect x="764.7" y="26" width="2" height="1" fill="#fff45a"/><rect x="751.4" y="27" width="6" height="1" fill="#ffee40"/><rect x="753.4" y="27" width="3" height="1" fill="#e8e060"/><rect x="759.5" y="27" width="6" height="1" fill="#f8f8c0"/><rect x="760.1" y="28" width="6" height="1" fill="#fff45a"/><rect x="763.4" y="28" width="2" height="1" fill="#ffee40"/><rect x="760.1" y="29" width="4" height="1" fill="#ffee40"/><rect x="761.1" y="29" width="2" height="1" fill="#fff45a"/><rect x="764.9" y="29" width="4" height="1" fill="#f8f8c0"/><rect x="761.3" y="30" width="8" height="1" fill="#e8e060"/><rect x="763.8" y="30" width="3" height="1" fill="#ffffff"/><rect x="750.6" y="32" width="6" height="1" fill="#ffee40"/><rect x="753.4" y="32" width="3" height="1" fill="#e8e060"/><rect x="752.1" y="32" width="6" height="1" fill="#e8e060"/><rect x="751.1" y="33" width="7" height="1" fill="#fff45a"/><rect x="754.8" y="33" width="2" height="1" fill="#fff45a"/><rect x="761.7" y="33" width="8" height="1" fill="#ffffff"/><rect x="766.8" y="34" width="5" height="1" fill="#fff45a"/><rect x="755.0" y="35" width="3" height="1" fill="#e8e060"/><rect x="756.0" y="35" width="3" height="1" fill="#f8f8c0"/><rect x="757.7" y="36" width="3" height="1" fill="#e8e060"/><rect x="758.7" y="36" width="4" height="1" fill="#e8e060"/><rect x="759.9" y="37" width="7" height="1" fill="#ffee40"/><rect x="761.6" y="37" width="4" height="1" fill="#e8e060"/><rect x="763.7" y="38" width="4" height="1" fill="#f8f8c0"/><rect x="765.4" y="38" width="4" height="1" fill="#ffee40"/><rect x="761.8" y="38" width="6" height="1" fill="#ffee40"/><rect x="764.9" y="38" width="2" height="1" fill="#f8f8c0"/><rect x="759.6" y="39" width="7" height="1" fill="#fff45a"/><rect x="755.4" y="39" width="6" height="1" fill="#e8e060"/><rect x="755.6" y="40" width="3" height="1" fill="#ffee40"/><rect x="763.7" y="41" width="7" height="1" fill="#e8e060"/><rect x="761.3" y="43" width="5" height="1" fill="#ffee40"/><rect x="764.1" y="43" width="3" height="1" fill="#ffffff"/><rect x="751.4" y="45" width="6" height="1" fill="#ffffff"/><rect x="752.4" y="45" width="2" height="1" fill="#f8f8c0"/><rect x="764.1" y="45" width="3" height="1" fill="#ffee40"/><rect x="756.8" y="46" width="4" height="1" fill="#f8f8c0"/><rect x="765.6" y="46" width="3" height="1" fill="#ffee40"/><rect x="766.6" y="46" width="4" height="1" fill="#fff45a"/><rect x="759.7" y="47" width="6" height="1" fill="#ffffff"/><rect x="760.8" y="47" width="3" height="1" fill="#e8e060"/><rect x="763.8" y="47" width="4" height="1" fill="#e8e060"/><rect x="765.5" y="47" width="2" height="1" fill="#ffffff"/><rect x="762.0" y="48" width="4" height="1" fill="#e8e060"/><rect x="763.3" y="48" width="2" height="1" fill="#fff45a"/><rect x="766.0" y="50" width="6" height="1" fill="#e8e060"/><rect x="752.0" y="50" width="6" height="1" fill="#ffffff"/><rect x="753.8" y="50" width="4" height="1" fill="#f8f8c0"/><rect x="753.5" y="51" width="5" height="1" fill="#ffffff"/><rect x="756.5" y="51" width="5" height="1" fill="#e8e060"/><rect x="758.1" y="51" width="2" height="1" fill="#ffffff"/><rect x="529.8" y="63" width="8" height="1" fill="#ffc020"/><rect x="533.7" y="63" width="3" height="1" fill="#ffea40"/><rect x="529.5" y="63" width="9" height="1" fill="#fff06a"/><rect x="538.4" y="64" width="5" height="1" fill="#ffea40"/><rect x="539.8" y="64" width="4" height="1" fill="#f8f4b0"/><rect x="536.5" y="65" width="10" height="1" fill="#ffe428"/><rect x="543.1" y="65" width="3" height="1" fill="#f8f4b0"/><rect x="531.4" y="65" width="6" height="1" fill="#ff9a30"/><rect x="533.7" y="65" width="2" height="1" fill="#fff06a"/><rect x="541.9" y="66" width="8" height="1" fill="#f8f4b0"/><rect x="546.7" y="66" width="4" height="1" fill="#ffc020"/><rect x="528.9" y="66" width="6" height="1" fill="#ffea40"/><rect x="530.0" y="66" width="3" height="1" fill="#fff06a"/><rect x="533.5" y="67" width="9" height="1" fill="#fff06a"/><rect x="534.5" y="68" width="6" height="1" fill="#f8f4b0"/><rect x="536.0" y="68" width="3" height="1" fill="#ffc020"/><rect x="531.0" y="68" width="9" height="1" fill="#ffe428"/><rect x="527.5" y="69" width="11" height="1" fill="#ffe020"/><rect x="529.8" y="69" width="3" height="1" fill="#ffe428"/><rect x="541.4" y="69" width="8" height="1" fill="#f8f4b0"/><rect x="545.2" y="69" width="2" height="1" fill="#ffc020"/><rect x="542.1" y="70" width="6" height="1" fill="#fff06a"/><rect x="537.2" y="71" width="10" height="1" fill="#ffc020"/><rect x="543.6" y="71" width="2" height="1" fill="#fff8a0"/><rect x="532.7" y="72" width="9" height="1" fill="#ffc020"/><rect x="536.3" y="72" width="2" height="1" fill="#ffe428"/><rect x="531.1" y="72" width="7" height="1" fill="#ff9a30"/><rect x="538.4" y="73" width="7" height="1" fill="#ffc020"/><rect x="541.7" y="74" width="5" height="1" fill="#ffea40"/><rect x="532.1" y="75" width="9" height="1" fill="#ffe020"/><rect x="531.5" y="75" width="11" height="1" fill="#ff9a30"/><rect x="533.3" y="75" width="3" height="1" fill="#ffe020"/><rect x="536.3" y="76" width="10" height="1" fill="#f8f4b0"/><rect x="537.2" y="77" width="5" height="1" fill="#ffe428"/><rect x="539.4" y="77" width="2" height="1" fill="#ffe428"/><rect x="536.5" y="77" width="9" height="1" fill="#ff9a30"/><rect x="542.2" y="77" width="2" height="1" fill="#fff06a"/><rect x="531.0" y="78" width="5" height="1" fill="#fff06a"/><rect x="532.6" y="78" width="4" height="1" fill="#ffea40"/><rect x="536.6" y="78" width="6" height="1" fill="#fff8a0"/><rect x="528.9" y="79" width="10" height="1" fill="#ff9a30"/><rect x="531.2" y="79" width="10" height="1" fill="#ffea40"/><rect x="539.2" y="79" width="2" height="1" fill="#ffe020"/><rect x="538.9" y="80" width="8" height="1" fill="#fff8a0"/><rect x="544.3" y="80" width="2" height="1" fill="#fff06a"/><rect x="530.8" y="80" width="5" height="1" fill="#ffe428"/><rect x="535.3" y="81" width="10" height="1" fill="#ff9a30"/><rect x="538.4" y="81" width="3" height="1" fill="#f8f4b0"/><rect x="527.8" y="81" width="11" height="1" fill="#ffc020"/><rect x="531.4" y="82" width="6" height="1" fill="#ffea40"/><rect x="533.2" y="82" width="2" height="1" fill="#ffc020"/><rect x="536.7" y="83" width="7" height="1" fill="#ffe428"/><rect x="534.8" y="83" width="10" height="1" fill="#f8f4b0"/><rect x="543.7" y="85" width="5" height="1" fill="#f8f4b0"/><rect x="546.6" y="85" width="3" height="1" fill="#ff9a30"/><rect x="527.5" y="85" width="11" height="1" fill="#ffe428"/><rect x="527.8" y="86" width="9" height="1" fill="#f8f4b0"/><rect x="529.0" y="86" width="4" height="1" fill="#f8f4b0"/><rect x="530.4" y="86" width="9" height="1" fill="#ffea40"/><rect x="535.4" y="86" width="4" height="1" fill="#ffc020"/><rect x="540.4" y="88" width="8" height="1" fill="#fff06a"/><rect x="537.3" y="90" width="5" height="1" fill="#ffea40"/><rect x="539.3" y="90" width="3" height="1" fill="#ff9a30"/><rect x="529.5" y="91" width="9" height="1" fill="#ffe428"/><rect x="532.6" y="91" width="3" height="1" fill="#ffe428"/><rect x="532.4" y="92" width="8" height="1" fill="#ffe020"/><rect x="536.4" y="92" width="3" height="1" fill="#ff9a30"/><rect x="537.4" y="92" width="9" height="1" fill="#ffe020"/><rect x="538.0" y="93" width="11" height="1" fill="#fff8a0"/><rect x="532.0" y="94" width="11" height="1" fill="#f8f4b0"/><rect x="541.7" y="94" width="5" height="1" fill="#ffc020"/><rect x="538.0" y="95" width="6" height="1" fill="#ffe428"/><rect x="539.6" y="95" width="2" height="1" fill="#fff06a"/><rect x="537.4" y="95" width="8" height="1" fill="#ff9a30"/><rect x="540.7" y="96" width="8" height="1" fill="#ffc020"/><rect x="535.3" y="97" width="6" height="1" fill="#ffe020"/><rect x="533.3" y="97" width="8" height="1" fill="#fff06a"/><rect x="531.2" y="98" width="5" height="1" fill="#ffea40"/><rect x="534.5" y="98" width="6" height="1" fill="#ffc020"/><rect x="535.7" y="98" width="4" height="1" fill="#fff8a0"/><rect x="529.2" y="99" width="5" height="1" fill="#ffe020"/><rect x="531.6" y="99" width="3" height="1" fill="#ffe428"/><rect x="538.8" y="100" width="11" height="1" fill="#ffc020"/><rect x="527.6" y="101" width="8" height="1" fill="#f8f4b0"/><rect x="531.0" y="101" width="4" height="1" fill="#ffe428"/><rect x="527.8" y="101" width="11" height="1" fill="#ffea40"/><rect x="531.4" y="101" width="2" height="1" fill="#ffe020"/><rect x="536.1" y="102" width="6" height="1" fill="#f8f4b0"/><rect x="537.4" y="102" width="2" height="1" fill="#ffe428"/><rect x="531.1" y="102" width="8" height="1" fill="#f8f4b0"/><rect x="527.2" y="104" width="10" height="1" fill="#ffe020"/><rect x="531.1" y="104" width="4" height="1" fill="#ffc020"/><rect x="528.5" y="105" width="10" height="1" fill="#ffe020"/><rect x="527.7" y="105" width="7" height="1" fill="#fff06a"/><rect x="537.8" y="106" width="7" height="1" fill="#ff9a30"/><rect x="541.6" y="106" width="4" height="1" fill="#ff9a30"/><rect x="539.4" y="107" width="9" height="1" fill="#f8f4b0"/><rect x="533.7" y="107" width="7" height="1" fill="#ffe428"/><rect x="537.2" y="107" width="2" height="1" fill="#ffc020"/><rect x="529.1" y="108" width="5" height="1" fill="#ff9a30"/><rect x="531.4" y="108" width="4" height="1" fill="#fff8a0"/><rect x="527.3" y="108" width="8" height="1" fill="#fff06a"/><rect x="534.6" y="109" width="7" height="1" fill="#ffea40"/><rect x="537.4" y="109" width="4" height="1" fill="#ffe020"/><rect x="537.3" y="110" width="7" height="1" fill="#ffea40"/><rect x="531.5" y="111" width="8" height="1" fill="#ff9a30"/><rect x="527.7" y="112" width="5" height="1" fill="#ffe428"/><rect x="530.7" y="112" width="8" height="1" fill="#ff9a30"/><rect x="532.7" y="112" width="4" height="1" fill="#ffea40"/><rect x="533.9" y="113" width="10" height="1" fill="#ffe020"/><rect x="528.2" y="114" width="11" height="1" fill="#ff9a30"/><rect x="530.6" y="114" width="3" height="1" fill="#fff06a"/><rect x="540.7" y="115" width="10" height="1" fill="#fff8a0"/><rect x="537.3" y="116" width="9" height="1" fill="#fff8a0"/><rect x="543.2" y="116" width="4" height="1" fill="#fff06a"/><rect x="536.4" y="116" width="8" height="1" fill="#fff06a"/><rect x="538.8" y="116" width="3" height="1" fill="#ffc020"/><rect x="527.1" y="117" width="9" height="1" fill="#ffea40"/><rect x="535.3" y="117" width="5" height="1" fill="#fff8a0"/><rect x="540.7" y="118" width="5" height="1" fill="#fff06a"/><rect x="531.5" y="119" width="5" height="1" fill="#fff06a"/><rect x="578.7" y="63" width="6" height="1" fill="#fff45a"/><rect x="588.2" y="64" width="6" height="1" fill="#ffffff"/><rect x="579.7" y="64" width="3" height="1" fill="#d8e8ff"/><rect x="589.1" y="66" width="3" height="1" fill="#d8e8ff"/><rect x="578.9" y="67" width="5" height="1" fill="#d8e8ff"/><rect x="581.1" y="67" width="2" height="1" fill="#f4f080"/><rect x="577.4" y="67" width="5" height="1" fill="#fff45a"/><rect x="579.1" y="67" width="2" height="1" fill="#f4f080"/><rect x="582.8" y="68" width="4" height="1" fill="#f4f080"/><rect x="587.4" y="68" width="3" height="1" fill="#88b0f0"/><rect x="588.4" y="68" width="4" height="1" fill="#ffffff"/><rect x="580.8" y="70" width="6" height="1" fill="#fff45a"/><rect x="584.7" y="70" width="3" height="1" fill="#f4f080"/><rect x="587.3" y="71" width="6" height="1" fill="#88b0f0"/><rect x="588.4" y="71" width="4" height="1" fill="#a8c8ff"/><rect x="577.5" y="72" width="2" height="1" fill="#88b0f0"/><rect x="578.1" y="72" width="3" height="1" fill="#a8c8ff"/><rect x="577.3" y="75" width="3" height="1" fill="#88b0f0"/><rect x="578.3" y="75" width="3" height="1" fill="#88b0f0"/><rect x="582.2" y="76" width="2" height="1" fill="#ffffff"/><rect x="583.0" y="76" width="2" height="1" fill="#fff45a"/><rect x="583.8" y="78" width="2" height="1" fill="#d8e8ff"/><rect x="589.0" y="80" width="2" height="1" fill="#a8c8ff"/><rect x="589.0" y="80" width="4" height="1" fill="#a8c8ff"/><rect x="584.6" y="81" width="5" height="1" fill="#f4f080"/><rect x="587.7" y="83" width="2" height="1" fill="#f4f080"/><rect x="588.1" y="83" width="4" height="1" fill="#f4f080"/><rect x="591.8" y="83" width="3" height="1" fill="#88b0f0"/><rect x="583.8" y="84" width="2" height="1" fill="#ffffff"/><rect x="584.0" y="84" width="3" height="1" fill="#88b0f0"/><rect x="577.8" y="85" width="4" height="1" fill="#a8c8ff"/><rect x="579.7" y="85" width="4" height="1" fill="#d8e8ff"/><rect x="592.2" y="86" width="2" height="1" fill="#a8c8ff"/><rect x="593.2" y="86" width="2" height="1" fill="#d8e8ff"/><rect x="586.6" y="87" width="6" height="1" fill="#a8c8ff"/><rect x="588.1" y="88" width="6" height="1" fill="#88b0f0"/><rect x="591.3" y="88" width="3" height="1" fill="#ffffff"/><rect x="585.8" y="89" width="2" height="1" fill="#ffffff"/><rect x="586.6" y="89" width="4" height="1" fill="#88b0f0"/><rect x="578.5" y="89" width="6" height="1" fill="#ffffff"/><rect x="581.0" y="89" width="2" height="1" fill="#d8e8ff"/><rect x="587.7" y="91" width="4" height="1" fill="#ffffff"/><rect x="589.4" y="91" width="2" height="1" fill="#fff45a"/><rect x="584.0" y="92" width="6" height="1" fill="#ffffff"/><rect x="590.1" y="94" width="4" height="1" fill="#fff45a"/><rect x="591.0" y="97" width="3" height="1" fill="#fff45a"/><rect x="582.0" y="97" width="6" height="1" fill="#88b0f0"/><rect x="588.2" y="99" width="2" height="1" fill="#ffffff"/><rect x="588.2" y="99" width="2" height="1" fill="#a8c8ff"/><rect x="583.4" y="100" width="5" height="1" fill="#88b0f0"/><rect x="586.1" y="100" width="3" height="1" fill="#d8e8ff"/><rect x="580.6" y="102" width="4" height="1" fill="#ffffff"/><rect x="582.1" y="102" width="3" height="1" fill="#d8e8ff"/><rect x="584.8" y="103" width="6" height="1" fill="#f4f080"/><rect x="580.4" y="104" width="4" height="1" fill="#d8e8ff"/><rect x="591.3" y="105" width="3" height="1" fill="#88b0f0"/><rect x="592.3" y="105" width="3" height="1" fill="#88b0f0"/><rect x="578.4" y="106" width="5" height="1" fill="#ffffff"/><rect x="583.7" y="108" width="2" height="1" fill="#a8c8ff"/><rect x="588.9" y="108" width="6" height="1" fill="#f4f080"/><rect x="587.6" y="109" width="5" height="1" fill="#a8c8ff"/><rect x="579.5" y="113" width="2" height="1" fill="#ffffff"/><rect x="581.3" y="113" width="3" height="1" fill="#a8c8ff"/><rect x="588.8" y="114" width="4" height="1" fill="#88b0f0"/><rect x="585.8" y="115" width="2" height="1" fill="#f4f080"/><rect x="586.7" y="115" width="3" height="1" fill="#d8e8ff"/><rect x="581.1" y="116" width="6" height="1" fill="#a8c8ff"/><rect x="585.0" y="117" width="6" height="1" fill="#f4f080"/><rect x="0" y="0" width="33" height="124" fill="url(#lg)"/><rect x="1318" y="0" width="46" height="124" fill="url(#rg)"/><rect x="1364" y="0" width="114" height="124" fill="#003282"/><line x1="209.7" y1="0" x2="209.7" y2="124" stroke="#22c83a" stroke-width="1" stroke-dasharray="4 2"/><line x1="226.7" y1="0" x2="226.7" y2="124" stroke="#22c83a" stroke-width="1" stroke-dasharray="4 2"/><line x1="953.5" y1="0" x2="953.5" y2="124" stroke="#b01838" stroke-width="1" stroke-dasharray="4 2"/><line x1="976.3" y1="0" x2="976.3" y2="124" stroke="#b01838" stroke-width="1" stroke-dasharray="4 2"/><rect x="2" y="54" width="1476" height="1.2" fill="#f4f8ff"/><rect x="2" y="120" width="1476" height="1.2" fill="#f4f8ff"/><rect x="0" y="123" width="1478" height="1" fill="#001a50"/></svg>
<div class="t" style="left:10px;top:105px;font-size:10.67px;color:#fff">14:27:45</div>
<div class="t" style="left:10px;top:171px;font-size:10.67px;color:#fff">14:27:30</div>
<div class="a" style="left:44px;top:168px;width:75px;height:14px;background:rgba(10,26,70,.78)"></div>
<div class="t" style="left:48px;top:171px;font-size:10.67px;color:#fff">DF: +1386 Hz</div>
<div class="a" style="left:1463px;top:168px;width:15px;height:16px;background:#0a1846"></div>
<div class="t" style="left:1466px;top:171px;font-size:10.67px;color:#fff">RX</div>
<div class="a" style="left:0;top:184px;width:1478px;height:2px;background:#f6f8fc"></div>
<div class="a" style="left:0;top:185.8px;width:1478px;height:18.8px;background:#000"></div>
<div class="a" style="left:0px;top:186.7px;width:86.5px;height:17.1px;background:#fff"></div>
<div class="t" style="left:3px;top:190px;font-size:12.3px">Velocidad 9</div>
<div class="a" style="left:71.5px;top:186.7px;width:15px;height:17.1px;background:linear-gradient(#f6f6f6,#e6e6e6)"></div><svg class="a" style="left:71.5px;top:186.7px" width="15" height="17.1"><path d="M3.8 5.3500000000000005l3.7-4.1 3.7 4.1z M3.8 11.450000000000001l3.7 4.1 3.7-4.1z" fill="#000"/><path d="M0 8.350000000000001h15" stroke="#d4d4d4" stroke-width="0.8"/></svg>
<div class="a" style="left:88.7px;top:186.7px;width:121.3px;height:17.1px;background:#fff"></div>
<div class="t" style="left:91.7px;top:190px;font-size:12.3px">Empezar 0 Hz</div>
<div class="a" style="left:195px;top:186.7px;width:15px;height:17.1px;background:linear-gradient(#f6f6f6,#e6e6e6)"></div><svg class="a" style="left:195px;top:186.7px" width="15" height="17.1"><path d="M3.8 5.3500000000000005l3.7-4.1 3.7 4.1z M3.8 11.450000000000001l3.7 4.1 3.7-4.1z" fill="#000"/><path d="M0 8.350000000000001h15" stroke="#d4d4d4" stroke-width="0.8"/></svg>
<div class="a" style="left:211.5px;top:186.7px;width:88.5px;height:17.1px;background:#fff"></div>
<div class="t" style="left:214.5px;top:190px;font-size:11.8px">BW 4000 Hz</div>
<div class="a" style="left:285px;top:186.7px;width:15px;height:17.1px;background:linear-gradient(#f6f6f6,#e6e6e6)"></div><svg class="a" style="left:285px;top:186.7px" width="15" height="17.1"><path d="M3.8 5.3500000000000005l3.7-4.1 3.7 4.1z M3.8 11.450000000000001l3.7 4.1 3.7-4.1z" fill="#000"/><path d="M0 8.350000000000001h15" stroke="#d4d4d4" stroke-width="0.8"/></svg>
<div class="a" style="left:301.5px;top:186.7px;width:78.5px;height:17.1px;background:#fff"></div>
<div class="cb" style="left:303px;top:189px"></div>
<div class="t" style="left:320px;top:190px;font-size:12.3px">FD</div>
<div class="cb" style="left:342px;top:189px"></div>
<svg class="a" style="left:344px;top:191px" width="9" height="9"><path d="M1 1L8 8M8 1L1 8" stroke="#000" stroke-width="2.8"/></svg>
<div class="t" style="left:360px;top:190px;font-size:12.3px">AF</div>
<div class="a" style="left:381px;top:186.7px;width:597px;height:17.1px;background:linear-gradient(#f6f6f6,#ececec 50%,#dedede)"></div>
<div class="a" style="left:980px;top:186.7px;width:498px;height:17.1px;background:linear-gradient(#f6f6f6,#ececec 50%,#dedede)"></div>
<div class="a" style="left:976px;top:186.5px;width:6px;height:1.5px;background:#000"></div><div class="a" style="left:976px;top:202.3px;width:6px;height:1.5px;background:#000"></div>
<div class="t" style="left:639px;top:191.3px;font-size:10.3px;color:#111">GUARDAR ESTE</div>
<div class="t" style="left:1237px;top:191.3px;font-size:10.3px;color:#111">GUARDAR PRÓX</div>
<div class="a" style="left:3px;top:206px;width:52px;height:20px;background:#5fe2e0;border-left:1px solid #3aa8b0;border-top:1px solid #8cf0ee"></div>
<div class="t" style="left:3px;top:211px;width:52px;text-align:center;font-size:12px">FT8</div>
<div class="cb" style="left:60px;top:209.5px"></div>
<svg class="a" style="left:62px;top:211.5px" width="9" height="9"><path d="M1 1L8 8M8 1L1 8" stroke="#000" stroke-width="2.8"/></svg>
<div class="t" style="left:78px;top:210.5px;font-size:12px">Auto Dec</div>
<div class="cb" style="left:141px;top:209.5px"></div>
<div class="t" style="left:159px;top:210.5px;font-size:12px;color:#8a8a8a">RT Dec</div>
<div class="a" style="left:215px;top:206px;width:59.3px;height:19.5px;background:#f3f3f3;border:1px solid #a0a0a0;border-right-color:#fff;border-bottom-color:#fff"></div>
<div class="t" style="left:215px;top:210.5px;width:59px;text-align:center;font-size:12px">DECODE</div>
<div class="a" style="left:281px;top:206.2px;width:59.8px;height:19.6px;background:#46dc0a"></div>
<div class="t" style="left:281px;top:210.5px;width:60px;text-align:center;font-size:12px;letter-spacing:-0.3px">RECEIVE</div>
<div class="a" style="left:346px;top:206px;width:1042px;height:20px;border-left:1px solid #9a9a9a;border-top:1px solid #c8c8c8;border-bottom:1px solid #fff"></div>
<div class="t" style="left:351px;top:209.5px;font-size:13px;font-weight:bold;color:#111">Txing: VK9QO EA8AQV 73</div>
<div class="a" style="left:1393.2px;top:206px;width:85px;height:20px;background:#000"></div>
<div class="a" style="left:1393.2px;top:206px;width:85px;height:10px;background:repeating-linear-gradient(90deg,#1eaaf0 0,#1eaaf0 2.75px,#002a48 2.75px,#002a48 3.95px)"></div>
<div class="t" style="left:1395.3px;top:215.7px;font-size:10px;font-weight:bold;color:#289cdc">dB</div>
<div class="t" style="left:1417px;top:215.7px;font-size:10px;font-weight:bold;color:#289cdc">-40</div>
<div class="t" style="left:1441.6px;top:215.7px;font-size:10px;font-weight:bold;color:#289cdc">-30</div>
<div class="t" style="left:1465.6px;top:215.7px;font-size:10px;font-weight:bold;color:#289cdc">-20</div>
<div class="a" style="left:1px;top:227.3px;width:796px;height:17.4px;border:1px solid #b8b8b8;border-top-color:#c4c4c4;border-bottom:1.5px solid #b0b0b0;border-radius:2px;background:linear-gradient(#f7f7f7,#ececec 50%,#d8d8d8)"></div>
<div class="t" style="left:0;top:229.6px;width:797px;text-align:center;font-size:12px">FT4</div>
<div class="a" style="left:799px;top:227.3px;width:690px;height:17.4px;border:1px solid #7ed67e;border-bottom:1.5px solid #70c470;border-radius:2px;background:linear-gradient(#94f094,#8eea8e 60%,#84dc84)"></div>
<div class="t" style="left:1177px;top:229.6px;width:40px;text-align:center;font-size:12px">FT8</div>
<div class="a" style="left:0;top:246px;width:797px;height:414.7px;background:#fff;overflow:hidden">
<div class="a mono" style="left:0;top:19px;width:780px;height:396px;overflow:hidden">
<div class="row" style="top:-4px;width:780px;background:#fff"><div class="c" style="left:0;width:71px">142330</div><div class="c" style="left:71px;width:45px">9</div><div class="c" style="left:116px;width:50px">0.0</div><div class="c" style="left:171px;text-align:left">HZ1DG YB1TJ <span class="hg">73</span></div><div class="c" style="left:571px;text-align:left">Indonesia</div><div class="c" style="left:670px;width:55px">−</div><div class="c" style="left:725px;width:55px">2014</div></div>
<div class="row" style="top:12px;width:780px;background:#fff"><div class="c" style="left:0;width:71px">142330</div><div class="c" style="left:71px;width:45px">−6</div><div class="c" style="left:116px;width:50px">−0.1</div><div class="c" style="left:171px;text-align:left">HZ1DG YC0APU OI33</div><div class="c" style="left:571px;text-align:left">Indonesia</div><div class="c" style="left:670px;width:55px">13544</div><div class="c" style="left:725px;width:55px">1461</div></div>
<div class="row" style="top:28px;width:780px;background:#d3def0"><div class="c" style="left:0;width:71px">142345</div><div class="c" style="left:71px;width:45px">13</div><div class="c" style="left:116px;width:50px">−0.2</div><div class="c" style="left:171px;text-align:left"><span class="hg">CQ</span> HZ1DG LK18</div><div class="c" style="left:571px;text-align:left">Saudi Arab…</div><div class="c" style="left:670px;width:55px">6028</div><div class="c" style="left:725px;width:55px">1415</div></div>
<div class="row" style="top:44px;width:780px;background:#fff"><div class="c" style="left:0;width:71px">142400</div><div class="c" style="left:71px;width:45px">−10</div><div class="c" style="left:116px;width:50px">−0.1</div><div class="c" style="left:171px;text-align:left">HZ1DG YC0APU OI33</div><div class="c" style="left:571px;text-align:left">Indonesia</div><div class="c" style="left:670px;width:55px">13544</div><div class="c" style="left:725px;width:55px">1461</div></div>
<div class="row" style="top:60px;width:780px;background:#d3def0"><div class="c" style="left:0;width:71px">142415</div><div class="c" style="left:71px;width:45px">13</div><div class="c" style="left:116px;width:50px">−0.2</div><div class="c" style="left:171px;text-align:left">9Y4D HZ1DG +03</div><div class="c" style="left:571px;text-align:left">Saudi Arab…</div><div class="c" style="left:670px;width:55px">−</div><div class="c" style="left:725px;width:55px">1415</div></div>
<div class="row" style="top:76px;width:780px;background:#fff"><div class="c" style="left:0;width:71px">142430</div><div class="c" style="left:71px;width:45px">−7</div><div class="c" style="left:116px;width:50px">−0.1</div><div class="c" style="left:171px;text-align:left">HZ1DG YC0APU OI33</div><div class="c" style="left:571px;text-align:left">Indonesia</div><div class="c" style="left:670px;width:55px">13544</div><div class="c" style="left:725px;width:55px">1460</div></div>
<div class="row" style="top:92px;width:780px;background:#d3def0"><div class="c" style="left:0;width:71px">142445</div><div class="c" style="left:71px;width:45px">12</div><div class="c" style="left:116px;width:50px">−0.2</div><div class="c" style="left:171px;text-align:left">9Y4D HZ1DG <span class="hg">RR73</span></div><div class="c" style="left:571px;text-align:left">Saudi Arab…</div><div class="c" style="left:670px;width:55px">−</div><div class="c" style="left:725px;width:55px">1415</div></div>
<div class="row" style="top:108px;width:780px;background:#fff"><div class="c" style="left:0;width:71px">142515</div><div class="c" style="left:71px;width:45px">13</div><div class="c" style="left:116px;width:50px">−0.2</div><div class="c" style="left:171px;text-align:left"><span class="hg">CQ</span> HZ1DG LK18</div><div class="c" style="left:571px;text-align:left">Saudi Arab…</div><div class="c" style="left:670px;width:55px">6028</div><div class="c" style="left:725px;width:55px">1415</div></div>
<div class="row" style="top:124px;width:780px;background:#d3def0"><div class="c" style="left:0;width:71px">142530</div><div class="c" style="left:71px;width:45px">−7</div><div class="c" style="left:116px;width:50px">−0.1</div><div class="c" style="left:171px;text-align:left"><span class="hg">CQ</span> <span class="hy">VK9QO</span> OH29</div><div class="c" style="left:571px;text-align:left">Norfolk Is.</div><div class="c" style="left:670px;width:55px">13558</div><div class="c" style="left:725px;width:55px">528</div></div>
<div class="row" style="top:140px;width:780px;background:#d3def0"><div class="c" style="left:0;width:71px">142530</div><div class="c" style="left:71px;width:45px">−9</div><div class="c" style="left:116px;width:50px">−0.1</div><div class="c" style="left:171px;text-align:left">HZ1DG YC0APU OI33</div><div class="c" style="left:571px;text-align:left">Indonesia</div><div class="c" style="left:670px;width:55px">13544</div><div class="c" style="left:725px;width:55px">1457</div></div>
<div class="row" style="top:156px;width:780px;background:#fff"><div class="c" style="left:0;width:71px">142600</div><div class="c" style="left:71px;width:45px">−11</div><div class="c" style="left:116px;width:50px">−0.2</div><div class="c" style="left:171px;text-align:left"><span class="hg">CQ</span> <span class="hy">VK9QO</span> OH29</div><div class="c" style="left:571px;text-align:left">Norfolk Is.</div><div class="c" style="left:670px;width:55px">13558</div><div class="c" style="left:725px;width:55px">529</div></div>
<div class="row" style="top:172px;width:780px;background:#fff"><div class="c" style="left:0;width:71px">142600</div><div class="c" style="left:71px;width:45px">−8</div><div class="c" style="left:116px;width:50px">−0.1</div><div class="c" style="left:171px;text-align:left">HZ1DG YC0APU OI33</div><div class="c" style="left:571px;text-align:left">Indonesia</div><div class="c" style="left:670px;width:55px">13544</div><div class="c" style="left:725px;width:55px">1458</div></div>
<div class="row" style="top:188px;width:780px;background:#d3def0"><div class="c" style="left:0;width:71px">142630</div><div class="c" style="left:71px;width:45px">−15</div><div class="c" style="left:116px;width:50px">−0.2</div><div class="c" style="left:171px;text-align:left"><span class="hr">EA8AQV</span> <span class="hy">VK9QO</span> +06</div><div class="c" style="left:571px;text-align:left">Norfolk Is.</div><div class="c" style="left:670px;width:55px">−</div><div class="c" style="left:725px;width:55px">532</div></div>
<div class="row" style="top:204px;width:780px;background:#d3def0"><div class="c" style="left:0;width:71px">142630</div><div class="c" style="left:71px;width:45px">−1</div><div class="c" style="left:116px;width:50px">−0.2</div><div class="c" style="left:171px;text-align:left">HZ1DG YB2TS OI52</div><div class="c" style="left:571px;text-align:left">Indonesia</div><div class="c" style="left:670px;width:55px">13984</div><div class="c" style="left:725px;width:55px">1340</div></div>
<div class="row" style="top:220px;width:780px;background:#d3def0"><div class="c" style="left:0;width:71px">142630</div><div class="c" style="left:71px;width:45px">−8</div><div class="c" style="left:116px;width:50px">−0.1</div><div class="c" style="left:171px;text-align:left">HZ1DG YC0APU OI33</div><div class="c" style="left:571px;text-align:left">Indonesia</div><div class="c" style="left:670px;width:55px">13544</div><div class="c" style="left:725px;width:55px">1461</div></div>
<div class="row" style="top:236px;width:780px;background:#d3def0"><div class="c" style="left:0;width:71px">142630</div><div class="c" style="left:71px;width:45px">−16</div><div class="c" style="left:116px;width:50px">−0.2</div><div class="c" style="left:171px;text-align:left">EA8UE <span class="hy">VK9QO</span> +13</div><div class="c" style="left:571px;text-align:left">Norfolk Is.</div><div class="c" style="left:670px;width:55px">−</div><div class="c" style="left:725px;width:55px">591</div></div>
<div class="row" style="top:252px;width:780px;background:#fff"><div class="c" style="left:0;width:71px">142700</div><div class="c" style="left:71px;width:45px">−15</div><div class="c" style="left:116px;width:50px">−0.2</div><div class="c" style="left:171px;text-align:left"><span class="hr">EA8AQV</span> <span class="hg">RR73;</span> EA8DHH &lt;<span class="hy">VK9QO</span>&gt; −04</div><div class="c" style="left:571px;text-align:left">Norfolk Is.</div><div class="c" style="left:670px;width:55px">−</div><div class="c" style="left:725px;width:55px">532</div></div>
<div class="row" style="top:268px;width:780px;background:#fff"><div class="c" style="left:0;width:71px">142700</div><div class="c" style="left:71px;width:45px">0</div><div class="c" style="left:116px;width:50px">−0.2</div><div class="c" style="left:171px;text-align:left">HZ1DG YB2TS OI52</div><div class="c" style="left:571px;text-align:left">Indonesia</div><div class="c" style="left:670px;width:55px">13984</div><div class="c" style="left:725px;width:55px">1340</div></div>
<div class="row" style="top:284px;width:780px;background:#fff"><div class="c" style="left:0;width:71px">142700</div><div class="c" style="left:71px;width:45px">−8</div><div class="c" style="left:116px;width:50px">−0.1</div><div class="c" style="left:171px;text-align:left">HZ1DG YC0APU OI33</div><div class="c" style="left:571px;text-align:left">Indonesia</div><div class="c" style="left:670px;width:55px">13544</div><div class="c" style="left:725px;width:55px">1461</div></div>
<div class="row" style="top:300px;width:780px;background:#fff"><div class="c" style="left:0;width:71px">142700</div><div class="c" style="left:71px;width:45px">−18</div><div class="c" style="left:116px;width:50px">−0.1</div><div class="c" style="left:171px;text-align:left">EA8UE YB1RET OI33</div><div class="c" style="left:571px;text-align:left">Indonesia</div><div class="c" style="left:670px;width:55px">13544</div><div class="c" style="left:725px;width:55px">935</div></div>
<div class="row" style="top:316px;width:780px;background:#fff"><div class="c" style="left:0;width:71px">142700</div><div class="c" style="left:71px;width:45px">−15</div><div class="c" style="left:116px;width:50px">−0.2</div><div class="c" style="left:171px;text-align:left">EA8UE <span class="hg">RR73;</span> HZ1DG &lt;<span class="hy">VK9QO</span>&gt; −08</div><div class="c" style="left:571px;text-align:left">Norfolk Is.</div><div class="c" style="left:670px;width:55px">−</div><div class="c" style="left:725px;width:55px">592</div></div>
<div class="row" style="top:332px;width:780px;background:#d3def0"><div class="c" style="left:0;width:71px">142730</div><div class="c" style="left:71px;width:45px">−16</div><div class="c" style="left:116px;width:50px">0.1</div><div class="c" style="left:171px;text-align:left">EA8DHH <span class="hy">VK9QO</span> <span class="hg">RR73</span></div><div class="c" style="left:571px;text-align:left">Norfolk Is.</div><div class="c" style="left:670px;width:55px">−</div><div class="c" style="left:725px;width:55px">532</div></div>
<div class="row" style="top:348px;width:780px;background:#d3def0"><div class="c" style="left:0;width:71px">142730</div><div class="c" style="left:71px;width:45px">1</div><div class="c" style="left:116px;width:50px">−0.2</div><div class="c" style="left:171px;text-align:left">HZ1DG YB2TS OI52</div><div class="c" style="left:571px;text-align:left">Indonesia</div><div class="c" style="left:670px;width:55px">13984</div><div class="c" style="left:725px;width:55px">1341</div></div>
<div class="row" style="top:364px;width:780px;background:#d3def0"><div class="c" style="left:0;width:71px">142730</div><div class="c" style="left:71px;width:45px">−10</div><div class="c" style="left:116px;width:50px">−0.2</div><div class="c" style="left:171px;text-align:left">HZ1DG YC0APU OI33</div><div class="c" style="left:571px;text-align:left">Indonesia</div><div class="c" style="left:670px;width:55px">13544</div><div class="c" style="left:725px;width:55px">1461</div></div>
<div class="row" style="top:380px;width:780px;background:#d3def0;font-weight:bold;color:#000"><div class="c" style="left:0;width:71px">142730</div><div class="c" style="left:71px;width:45px">−17</div><div class="c" style="left:116px;width:50px">0.1</div><div class="c" style="left:171px;text-align:left">HZ1DG <span class="hy">VK9QO</span> R+02</div><div class="c" style="left:571px;text-align:left">Norfolk Is.</div><div class="c" style="left:670px;width:55px">−</div><div class="c" style="left:725px;width:55px">592</div></div>
<div class="dash" style="left:71px;top:0;height:396px"></div>
<div class="dash" style="left:116px;top:0;height:396px"></div>
<div class="dash" style="left:166px;top:0;height:396px"></div>
<div class="dash" style="left:566px;top:0;height:396px"></div>
<div class="dash" style="left:670px;top:0;height:396px"></div>
<div class="dash" style="left:725px;top:0;height:396px"></div>
</div>
<div class="hd" style="left:1px;top:0.3px;width:70px">Hora</div>
<div class="hd" style="left:71px;top:0.3px;width:45px">dB</div>
<div class="hd" style="left:116px;top:0.3px;width:50px">DT</div>
<div class="hd" style="left:166px;top:0.3px;width:400px">Mensaje 4 / 5.6s</div>
<div class="hd" style="left:566px;top:0.3px;width:104px">País</div>
<div class="hd" style="left:670px;top:0.3px;width:55px">Dist</div>
<div class="hd" style="left:725px;top:0.3px;width:55px">Freq</div>
<div class="a" style="left:780px;top:0;width:17px;height:416px;background:#f2f2f2;background-image:radial-gradient(#d4d4d4 0.6px,transparent 0.7px);background-size:2px 2px"></div>
<div class="btn" style="left:781px;top:1px;width:15px;height:15px;border-radius:2px"></div>
<svg class="a" style="left:781px;top:1px" width="15" height="15"><path d="M3.5 9.5l4-4.5 4 4.5z" fill="#000"/></svg>
<div class="btn" style="left:780.5px;top:258.5px;width:15.5px;height:124.5px;background:linear-gradient(90deg,#f6f6f6,#ececec 50%,#dedede)"></div>
<div class="a" style="left:783.5px;top:311px;width:10px;height:19px;background-image:radial-gradient(#b8b8b8 0.7px,transparent 0.9px);background-size:3px 3px"></div>
<div class="btn" style="left:780.5px;top:383.5px;width:15.5px;height:15.5px"></div>
<svg class="a" style="left:780.5px;top:383.5px" width="15" height="15"><path d="M3.5 10l4-4.5 4 4.5z" fill="#000"/></svg>
<div class="btn" style="left:780.5px;top:399px;width:15.5px;height:15.5px"></div>
<svg class="a" style="left:780.5px;top:399px" width="15" height="15"><path d="M3.5 5.5l4 4.5 4-4.5z" fill="#000"/></svg>
</div>
<div class="a" style="left:796.7px;top:246px;width:2.5px;height:417px;background:#b4b4b4"></div>
<div class="a" style="left:799px;top:246px;width:679px;height:414.7px;background:#fff;overflow:hidden">
<div class="a mono" style="left:0;top:19px;width:679px;height:396px;overflow:hidden">
<div class="row" style="top:0px;width:679px"><div class="c" style="left:1px;width:70px">142557</div><div class="c" style="left:71px;width:45px">TX</div><div class="c" style="left:116px;width:50px"></div><div class="c" style="left:171px;text-align:left"><span class="hy">VK9QO</span> <span class="hr">EA8AQV</span> IL28</div><div class="c" style="left:571px;text-align:left"></div></div>
<div class="row" style="top:16px;width:679px"><div class="c" style="left:1px;width:70px">142600</div><div class="c" style="left:71px;width:45px">−11</div><div class="c" style="left:116px;width:50px">−0.2</div><div class="c" style="left:171px;text-align:left"><span class="hg">CQ</span> <span class="hy">VK9QO</span> OH29</div><div class="c" style="left:571px;text-align:left">Norfolk Is.</div><div class="c" style="left:677.5px;text-align:left;color:#a06030">1</div></div>
<div class="row" style="top:32px;width:679px"><div class="c" style="left:1px;width:70px">142615</div><div class="c" style="left:71px;width:45px">TX</div><div class="c" style="left:116px;width:50px"></div><div class="c" style="left:171px;text-align:left"><span class="hy">VK9QO</span> <span class="hr">EA8AQV</span> IL28</div><div class="c" style="left:571px;text-align:left"></div></div>
<div class="row" style="top:48px;width:679px"><div class="c" style="left:1px;width:70px">142630</div><div class="c" style="left:71px;width:45px">−15</div><div class="c" style="left:116px;width:50px">−0.2</div><div class="c" style="left:171px;text-align:left"><span class="hr">EA8AQV</span> <span class="hy">VK9QO</span> +06</div><div class="c" style="left:571px;text-align:left">Norfolk Is.</div></div>
<div class="row" style="top:64px;width:679px"><div class="c" style="left:1px;width:70px">142645</div><div class="c" style="left:71px;width:45px">TX</div><div class="c" style="left:116px;width:50px"></div><div class="c" style="left:171px;text-align:left"><span class="hy">VK9QO</span> <span class="hr">EA8AQV</span> R−15</div><div class="c" style="left:571px;text-align:left"></div></div>
<div class="row" style="top:80px;width:679px"><div class="c" style="left:1px;width:70px">142700</div><div class="c" style="left:71px;width:45px">−15</div><div class="c" style="left:116px;width:50px">−0.2</div><div class="c" style="left:171px;text-align:left"><span class="hr">EA8AQV</span> <span class="hg">RR73;</span> EA8DHH &lt;<span class="hy">VK9QO</span>&gt; −04</div><div class="c" style="left:571px;text-align:left">Norfolk Is.</div></div>
<div class="row" style="top:96px;width:679px"><div class="c" style="left:1px;width:70px">142715</div><div class="c" style="left:71px;width:45px">TX</div><div class="c" style="left:116px;width:50px"></div><div class="c" style="left:171px;text-align:left"><span class="hy">VK9QO</span> <span class="hr">EA8AQV</span> <span class="hg">73</span></div><div class="c" style="left:571px;text-align:left"></div></div>
<div class="row" style="top:112px;width:679px;font-weight:bold;color:#000"><div class="c" style="left:1px;width:70px">142730</div><div class="c" style="left:71px;width:45px">−16</div><div class="c" style="left:116px;width:50px">0.1</div><div class="c" style="left:171px;text-align:left">EA8DHH <span class="hy">VK9QO</span> <span class="hg">RR73</span></div><div class="c" style="left:571px;text-align:left">Norfolk Is.</div></div>
<div class="dash" style="left:71.5px;top:0;height:396px"></div>
<div class="dash" style="left:116.5px;top:0;height:396px"></div>
<div class="dash" style="left:166.5px;top:0;height:396px"></div>
<div class="dash" style="left:566px;top:0;height:396px"></div>
<div class="dash" style="left:670px;top:0;height:396px"></div>
</div>
<div class="hd" style="left:1px;top:0.3px;width:70px">Hora</div>
<div class="hd" style="left:71px;top:0.3px;width:45.5px">dB</div>
<div class="hd" style="left:116.5px;top:0.3px;width:49.5px">DT</div>
<div class="hd" style="left:166px;top:0.3px;width:400.5px">RX Frecuencia de Mensaje</div>
<div class="hd" style="left:566.5px;top:0.3px;width:103.5px">País</div>
<div class="hd" style="left:670px;top:0.3px;width:60px"></div>
</div>
<div class="a" style="left:0;top:660.5px;width:1478px;height:22.3px;background:linear-gradient(#dcdcdc,#b4b4b4 3px,#b8b8b8)"></div>
<div class="a" style="left:0;top:682.8px;width:1478px;height:2.2px;background:#fafafa"></div>
<div class="a" style="left:0;top:663.5px;width:254.3px;height:18.9px;background:linear-gradient(#34f234,#30e830 55%,#2cda2c);border-radius:0 2px 2px 0"></div>
<div class="t" style="left:0;top:668px;width:254px;text-align:center;font-size:12px">MONITOR</div>
<div class="a" style="left:256px;top:663.5px;width:252.8px;height:18.9px;background:linear-gradient(#f8f8f8,#efefef 45%,#e4e4e4 55%,#dadada);border-radius:2px;border-left:1px solid #fcfcfc;border-top:1px solid #fcfcfc"></div>
<div class="t" style="left:256px;top:668px;width:252.8px;text-align:center;font-size:12px">STOP MONITOR</div>
<div class="a" style="left:510.6px;top:663.5px;width:254.4px;height:18.9px;background:linear-gradient(#f8f8f8,#efefef 45%,#e4e4e4 55%,#dadada);border-radius:2px;border-left:1px solid #fcfcfc;border-top:1px solid #fcfcfc"></div>
<div class="t" style="left:510.6px;top:668px;width:254.4px;text-align:center;font-size:12px">BOR MNSJ</div>
<div class="a" style="left:767px;top:663.5px;width:252.7px;height:18.9px;background:linear-gradient(#f8f8f8,#efefef 45%,#e4e4e4 55%,#dadada);border-radius:2px;border-left:1px solid #fcfcfc;border-top:1px solid #fcfcfc"></div>
<div class="t" style="left:767px;top:668px;width:252.7px;text-align:center;font-size:12px">BOR RX FREC MNSJ</div>
<div class="a" style="left:1021.8px;top:663.5px;width:253.8px;height:18.9px;background:linear-gradient(#f8f8f8,#efefef 45%,#e4e4e4 55%,#dadada);border-radius:2px;border-left:1px solid #fcfcfc;border-top:1px solid #fcfcfc"></div>
<div class="t" style="left:1021.8px;top:668px;width:253.8px;text-align:center;font-size:12px">RESET QSO</div>
<div class="a" style="left:1277.8px;top:663.5px;width:253.2px;height:18.9px;background:linear-gradient(#f8f8f8,#efefef 45%,#e4e4e4 55%,#dadada);border-radius:2px;border-left:1px solid #fcfcfc;border-top:1px solid #fcfcfc"></div>
<div class="t" style="left:1277.8px;top:668px;width:253.2px;text-align:center;font-size:12px">STOP TX</div>
<div class="a" style="left:2px;top:684px;width:856px;height:164px;border-top:1px solid #fff;border-left:1px solid #fff;border-right:1.5px solid #6c6c6c;border-bottom:2px solid #5a5a5a;background:#f0f0f0"></div>
<div class="a" style="left:861px;top:685px;width:293px;height:163px;border-top:1px solid #fff;border-left:1px solid #fff;border-right:1.5px solid #6c6c6c;border-bottom:2px solid #5a5a5a;background:#f0f0f0"></div>
<div class="a" style="left:1156px;top:685px;width:330px;height:163px;border-top:1px solid #fff;border-left:1px solid #fff;border-right:1.5px solid #6c6c6c;border-bottom:2px solid #5a5a5a;background:#f0f0f0"></div>
<div class="t" style="left:292px;top:696.8px;font-size:16px;font-weight:bold;letter-spacing:-0.15px">EA8AQV IL28</div>
<div class="a" style="left:404.5px;top:693px;width:162px;height:22.5px;background:#d4f8d2;border:1px solid #9cb89c;border-radius:3px"></div>
<div class="t" style="left:411px;top:698px;font-size:14px;color:#0a1a5c;letter-spacing:-0.9px;text-shadow:0.3px 0 0 #0a1a5c">DIGU</div>
<div class="t" style="left:455px;top:697px;font-size:16px;font-weight:bold;letter-spacing:-0.1px">50.313.000</div>
<div class="a" style="left:548px;top:698px;width:14px;height:14px;border:1px solid #8a8a8a;border-radius:3px;background:#f2f2f2"></div>
<div class="t" style="left:548px;top:699.3px;width:14px;text-align:center;font-size:12px">F</div>
<div class="btn" style="left:233px;top:719.5px;width:80px;height:20px"></div>
<div class="t" style="left:233px;top:724px;width:80px;text-align:center;font-size:12px">ADD AL LOG</div>
<div class="t" style="left:315px;top:724px;font-size:12px">A RADIO:</div>
<div class="inp" style="left:367.5px;top:719.5px;width:177px;height:20px"></div>
<div class="t" style="left:371px;top:724px;font-size:12px">VK9QO</div>
<div class="t" style="left:547px;top:724px;font-size:12px;letter-spacing:-0.25px">RX RPT :</div>
<div class="inp" style="left:598px;top:719.5px;width:52px;height:20px"></div>
<div class="t" style="left:602px;top:724px;font-size:12px">+06</div>
<div class="a" style="left:650.5px;top:719.5px;width:15px;height:10.0px;border:1px solid #b8b4a0;border-radius:2px;background:#ece9d8"></div><div class="a" style="left:650.5px;top:729.5px;width:15px;height:10.0px;border:1px solid #b8b4a0;border-radius:2px;background:#ece9d8"></div><svg class="a" style="left:650.5px;top:719.5px" width="15" height="20"><path d="M4.0 7.0l3.5-4 3.5 4z M4.0 13.0l3.5 4 3.5-4z" fill="#000"/></svg>
<div class="t" style="left:269.5px;top:749px;font-size:12px">LOCATOR:</div>
<div class="inp" style="left:331px;top:744.5px;width:92px;height:20px"></div>
<div class="t" style="left:335px;top:749px;font-size:12px">OH29</div>
<div class="t" style="left:426px;top:749px;font-size:12px">DB:OH29</div>
<div class="btn" style="left:480px;top:744.5px;width:59px;height:20px"></div>
<div class="t" style="left:480px;top:749px;width:59px;text-align:center;font-size:12px">BUSCA</div>
<div class="btn" style="left:542px;top:744.5px;width:47px;height:20px"></div>
<div class="t" style="left:542px;top:749px;width:47px;text-align:center;font-size:12px">ADD</div>
<div class="t" style="left:278px;top:771.5px;font-size:12px;word-spacing:0px">Hot A: 92°&nbsp;&nbsp; Azimuth: 84°&nbsp;&nbsp; Elevación: 0°&nbsp;&nbsp; Dist: 13558 km</div>
<div class="t" style="left:276px;top:793.5px;font-size:12px;letter-spacing:-0.2px">MONITOR</div>
<div class="t" style="left:335px;top:793.5px;font-size:12px;color:#a01428">R1:</div>
<div class="inp" style="left:356px;top:789.5px;width:100px;height:20px;background:#ffffc6;border-color:#b0b0a0"></div>
<div class="t" style="left:461px;top:793.5px;font-size:12px;color:#a01428">R2:</div>
<div class="inp" style="left:482px;top:789.5px;width:100px;height:20px;background:#ffffc6;border:2px solid #3c84dc"></div>
<div class="t" style="left:342px;top:817.5px;font-size:16px;font-weight:bold;letter-spacing:-0.1px">5 Oct 2025</div>
<div class="t" style="left:432px;top:815px;font-size:21px;font-weight:bold">14:27:57</div>
<div class="cb" style="left:865px;top:691px"></div>
<div class="t" style="left:883.5px;top:692.5px;font-size:12px">Super Hound</div>
<div class="cb" style="left:1009px;top:691px;border-color:#9a9a9a"></div>
<svg class="a" style="left:1011px;top:693px" width="9" height="9"><path d="M1 1L8 8M8 1L1 8" stroke="#7a7a7a" stroke-width="2.4"/></svg>
<div class="t" style="left:1027.5px;top:692.5px;font-size:12px;color:#8a8a8a">Super Fox</div>
<div class="inp" style="left:864.5px;top:711.5px;width:286px;height:20px"></div>
<div class="t" style="left:868px;top:716px;font-size:12px">DF Tol def=1500 +/-&nbsp; 1500&nbsp; Hz</div>
<svg class="a" style="left:1135px;top:712.5px" width="15" height="18"><path d="M4 7l3.5-4 3.5 4z M4 11l3.5 4 3.5-4z" fill="#000"/></svg>
<div class="cb" style="left:864.5px;top:744px"></div>
<div class="t" style="left:882px;top:745.5px;font-size:12px">LTR</div>
<div class="btn" style="left:913.5px;top:741px;width:36px;height:19.5px"></div>
<div class="btn" style="left:948.5px;top:741px;width:36px;height:19.5px"></div>
<div class="t" style="left:913.5px;top:745px;width:36px;text-align:center;font-size:12px">TX</div>
<div class="t" style="left:948.5px;top:745px;width:36px;text-align:center;font-size:12px">RX</div>
<div class="a" style="left:944px;top:748px;width:9px;height:1.3px;background:#222"></div><div class="a" style="left:944px;top:752px;width:9px;height:1.3px;background:#222"></div>
<div class="t" style="left:1034.5px;top:745.5px;font-size:12px;letter-spacing:-0.3px">TX RPT :</div>
<div class="inp" style="left:1083px;top:741px;width:51px;height:19.5px"></div>
<div class="t" style="left:1087px;top:745.5px;font-size:12px">-15</div>
<div class="a" style="left:1135px;top:741px;width:15px;height:9.75px;border:1px solid #b8b4a0;border-radius:2px;background:#ece9d8"></div><div class="a" style="left:1135px;top:750.75px;width:15px;height:9.75px;border:1px solid #b8b4a0;border-radius:2px;background:#ece9d8"></div><svg class="a" style="left:1135px;top:741px" width="15" height="19.5"><path d="M4.0 6.875l3.5-4 3.5 4z M4.0 12.625l3.5 4 3.5-4z" fill="#000"/></svg>
<div class="a" style="left:864px;top:769px;width:29px;height:19px;background:#ff0000"></div>
<div class="t" style="left:864px;top:773.5px;width:29px;text-align:center;font-size:11px;color:#780000;letter-spacing:-0.35px">ASeq</div>
<div class="inp" style="left:896px;top:768px;width:88px;height:21px;background:#f0f0f0;border-color:#9a9a9a"></div>
<div class="t" style="left:900px;top:773px;font-size:12px;color:#8a8a8a">TX/RX 15&nbsp; s</div>
<div class="a" style="left:968px;top:769.5px;width:14px;height:18px;border:1px solid #c4c4c4;border-radius:2px;background:#f4f4f4"></div>
<svg class="a" style="left:968px;top:769.5px" width="14" height="18"><path d="M3.5 7l3.5-4 3.5 4z M3.5 11l3.5 4 3.5-4z" fill="#8a8a8a"/><path d="M1 9h12" stroke="#c4c4c4"/></svg>
<div class="a" style="left:987px;top:768.5px;width:39px;height:20px;border-top:1px solid #a0a0a0;border-left:1px solid #a0a0a0;border-bottom:1px solid #fff;border-right:1px solid #fff"></div>
<div class="t" style="left:990px;top:773px;font-size:12px">QRG :</div>
<div class="inp" style="left:1027px;top:768.5px;width:123px;height:20px"></div>
<div class="t" style="left:1031px;top:773px;font-size:12px">260</div>
<div class="a" style="left:864px;top:796px;width:86px;height:18.5px;border-top:1px solid #a0a0a0;border-left:1px solid #a0a0a0;border-bottom:1px solid #fff;border-right:1px solid #fff"></div>
<div class="t" style="left:864px;top:800.5px;width:86px;text-align:center;font-size:10.5px">RXF</div>
<div class="a" style="left:952.5px;top:798.5px;width:12.5px;height:12.5px;border:1px solid #a8a8a8;border-radius:50%;background:#fafafa"></div>
<div class="t" style="left:971px;top:799.5px;font-size:12px;letter-spacing:-0.25px">TX PRIMERO</div>
<div class="a" style="left:1049px;top:798.5px;width:12.5px;height:12.5px;border:1px solid #a8a8a8;border-radius:50%;background:#fafafa"></div>
<div class="a" style="left:1052.2px;top:801.7px;width:6.2px;height:6.2px;border-radius:50%;background:#000"></div>
<div class="t" style="left:1068px;top:799.5px;font-size:12px;letter-spacing:-0.25px">TX SEGUNDO</div>
<div class="btn" style="left:865px;top:821.5px;width:141px;height:20px"></div>
<div class="t" style="left:865px;top:826px;width:141px;text-align:center;font-size:12px">GEN MNSJ</div>
<div class="btn" style="left:1008px;top:821.5px;width:141px;height:20px"></div>
<div class="t" style="left:1008px;top:826px;width:141px;text-align:center;font-size:12px">AUTO ES OFF</div>
<div class="t" style="left:1160px;top:688px;font-size:12px">RX</div>
<div class="t" style="left:1160px;top:702.5px;width:17px;text-align:center;font-size:9.5px;color:#8a1010;letter-spacing:-0.3px">+20</div>
<div class="t" style="left:1160px;top:835.5px;width:17px;text-align:center;font-size:9.5px;color:#1a2a9a;letter-spacing:-0.3px">-20</div>
<div class="a" style="left:1160px;top:714.5px;width:17.8px;height:119px;background:#ece8d4;border:1px solid #d4d0bc"></div>
<svg class="a" style="left:1160px;top:714.5px" width="18" height="119"><rect x="7.3" y="5.3" width="2.8" height="107" fill="#f4f4f0" stroke="#8e8e86" stroke-width="0.8"/><rect x="1.5" y="10.2" width="4.4" height="1.4" fill="#141414"/><rect x="11.4" y="10.2" width="4.4" height="1.4" fill="#141414"/><rect x="1.5" y="16.3" width="4.4" height="1.4" fill="#141414"/><rect x="11.4" y="16.3" width="4.4" height="1.4" fill="#141414"/><rect x="1.5" y="22.3" width="4.4" height="1.4" fill="#141414"/><rect x="11.4" y="22.3" width="4.4" height="1.4" fill="#141414"/><rect x="1.5" y="28.4" width="4.4" height="1.4" fill="#141414"/><rect x="11.4" y="28.4" width="4.4" height="1.4" fill="#141414"/><rect x="1.5" y="34.5" width="4.4" height="1.4" fill="#141414"/><rect x="11.4" y="34.5" width="4.4" height="1.4" fill="#141414"/><rect x="1.5" y="40.5" width="4.4" height="1.4" fill="#141414"/><rect x="11.4" y="40.5" width="4.4" height="1.4" fill="#141414"/><rect x="1.5" y="46.6" width="4.4" height="1.4" fill="#141414"/><rect x="11.4" y="46.6" width="4.4" height="1.4" fill="#141414"/><rect x="1.5" y="52.7" width="4.4" height="1.4" fill="#141414"/><rect x="11.4" y="52.7" width="4.4" height="1.4" fill="#141414"/><rect x="1.5" y="58.8" width="4.4" height="1.4" fill="#141414"/><rect x="11.4" y="58.8" width="4.4" height="1.4" fill="#141414"/><rect x="1.5" y="64.8" width="4.4" height="1.4" fill="#141414"/><rect x="11.4" y="64.8" width="4.4" height="1.4" fill="#141414"/><rect x="1.5" y="70.9" width="4.4" height="1.4" fill="#141414"/><rect x="11.4" y="70.9" width="4.4" height="1.4" fill="#141414"/><rect x="1.5" y="77.0" width="4.4" height="1.4" fill="#141414"/><rect x="11.4" y="77.0" width="4.4" height="1.4" fill="#141414"/><rect x="1.5" y="83.0" width="4.4" height="1.4" fill="#141414"/><rect x="11.4" y="83.0" width="4.4" height="1.4" fill="#141414"/><rect x="1.5" y="89.1" width="4.4" height="1.4" fill="#141414"/><rect x="11.4" y="89.1" width="4.4" height="1.4" fill="#141414"/><rect x="1.5" y="95.2" width="4.4" height="1.4" fill="#141414"/><rect x="11.4" y="95.2" width="4.4" height="1.4" fill="#141414"/><rect x="1.5" y="101.3" width="4.4" height="1.4" fill="#141414"/><rect x="11.4" y="101.3" width="4.4" height="1.4" fill="#141414"/><rect x="1.5" y="107.3" width="4.4" height="1.4" fill="#141414"/><rect x="11.4" y="107.3" width="4.4" height="1.4" fill="#141414"/><rect x="3.2" y="55" width="10.8" height="7.6" rx="1.5" fill="#c4c0bc" stroke="#908c88" stroke-width="0.8"/><rect x="5" y="57.3" width="7.2" height="3" fill="#8e1216"/></svg>
<div class="inp" style="left:1181px;top:688.0px;width:310px;height:19.8px;background:#fff"></div>
<div class="t" style="left:1185px;top:692.3px;font-size:12px;color:#14146e;letter-spacing:-0.3px">VK9QO EA8AQV IL28</div>
<div class="inp" style="left:1181px;top:710.7px;width:310px;height:19.8px;background:#fff"></div>
<div class="t" style="left:1185px;top:715.0px;font-size:12px;color:#14146e;letter-spacing:-0.3px">VK9QO EA8AQV -15</div>
<div class="inp" style="left:1181px;top:733.4px;width:310px;height:19.8px;background:#fff"></div>
<div class="t" style="left:1185px;top:737.7px;font-size:12px;color:#14146e;letter-spacing:-0.3px">VK9QO EA8AQV R-15</div>
<div class="inp" style="left:1181px;top:756.1px;width:310px;height:19.8px;background:#fff"></div>
<div class="t" style="left:1185px;top:760.4px;font-size:12px;color:#14146e;letter-spacing:-0.3px">VK9QO EA8AQV RR73</div>
<div class="inp" style="left:1181px;top:778.8px;width:310px;height:19.8px;background:#fff"></div>
<div class="t" style="left:1185px;top:783.1px;font-size:12px;color:#14146e;letter-spacing:-0.3px">VK9QO EA8AQV 73</div>
<div class="inp" style="left:1181px;top:801.5px;width:310px;height:19.8px;background:#ffd0d0"></div>
<div class="t" style="left:1185px;top:805.8px;font-size:12px;color:#14146e;letter-spacing:-0.3px">CQ DX EA8AQV IL28</div>
<div class="inp" style="left:1181px;top:824.2px;width:310px;height:19.8px;background:#fff"></div>
<div class="t" style="left:1185px;top:828.5px;font-size:12px;color:#14146e;letter-spacing:-0.3px">QSL BUREAU 73</div>
</body></html>
